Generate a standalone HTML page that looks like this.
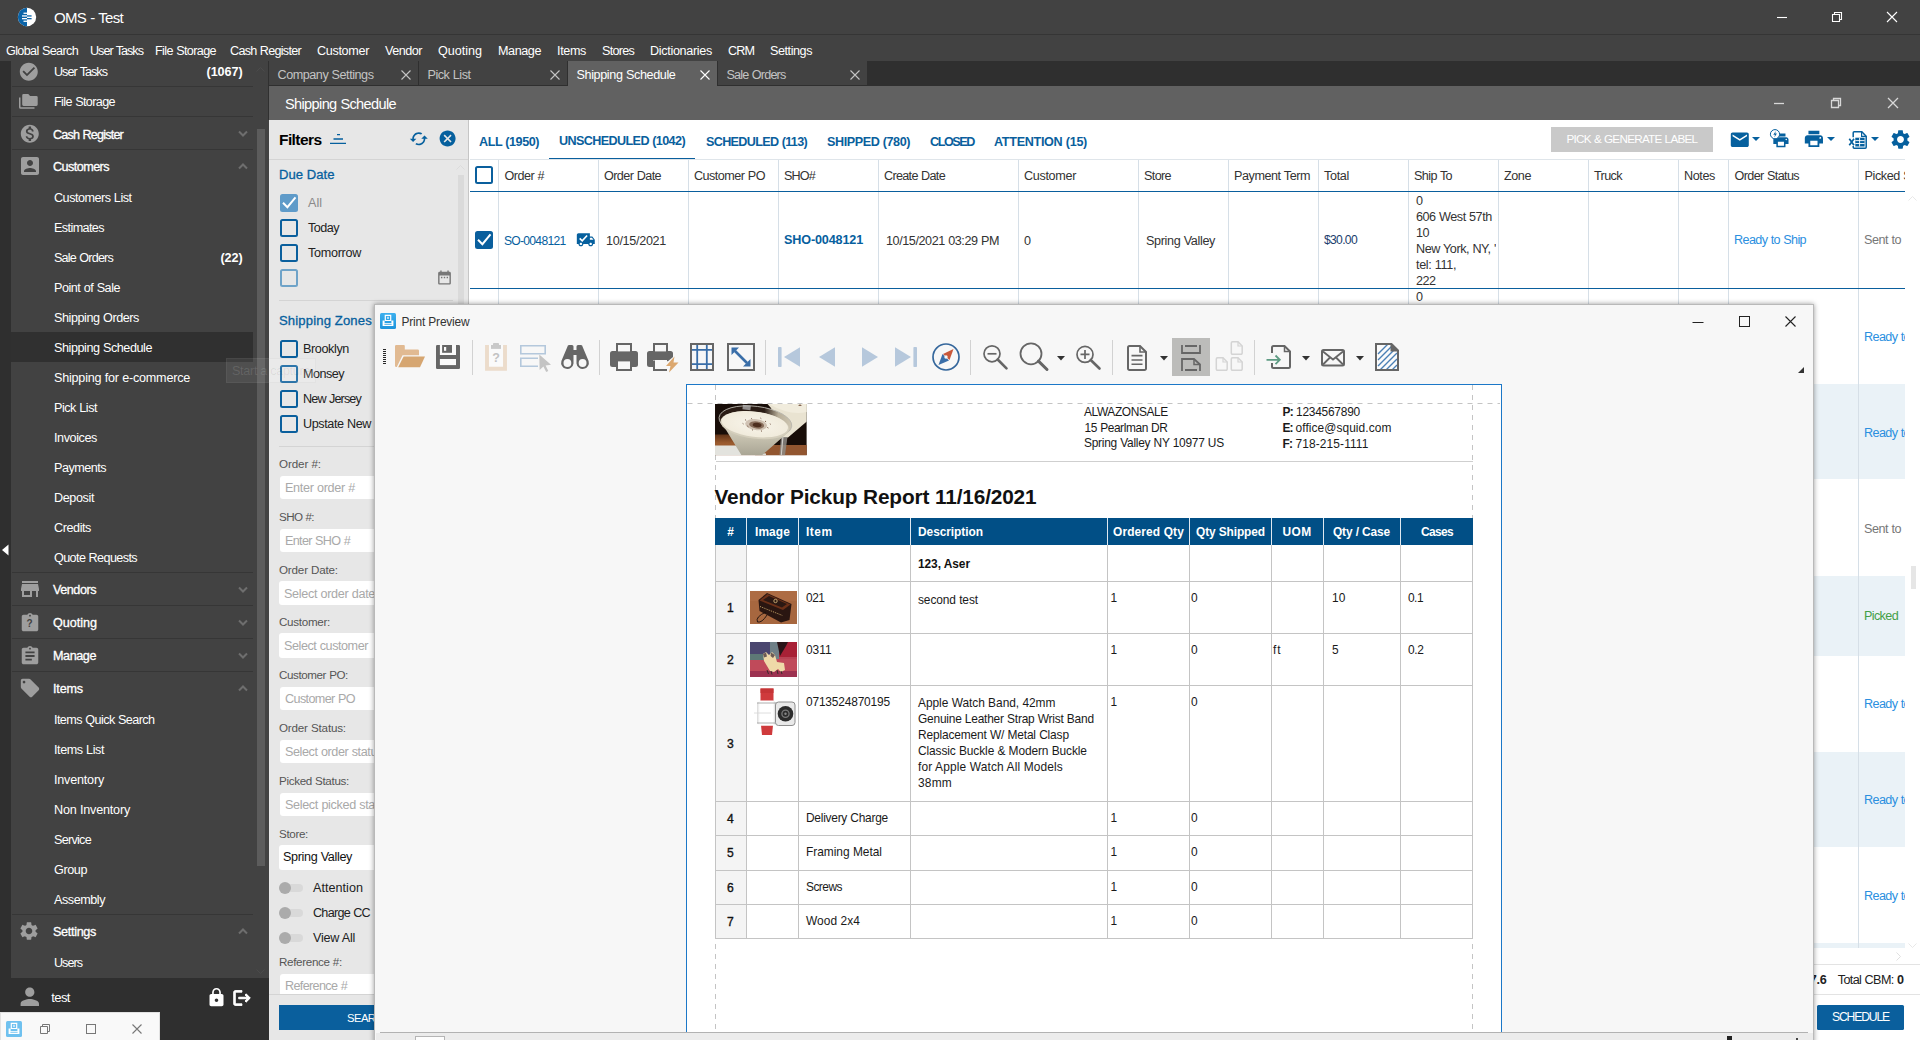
<!DOCTYPE html>
<html><head><meta charset="utf-8"><title>OMS - Test</title>
<style>
html,body{margin:0;padding:0;}
body{width:1920px;height:1040px;overflow:hidden;position:relative;background:#424242;font-family:"Liberation Sans",sans-serif;}
body div,body svg,.t{position:absolute;}
.t{white-space:nowrap;display:block;}
svg{overflow:visible;}
</style></head><body>
<div style="left:0px;top:0px;width:1920px;height:35px;background:#424242;"></div>
<div style="left:0px;top:34px;width:1920px;height:1px;background:#353535;"></div>
<svg style="left:17px;top:7px;" width="20" height="20" viewBox="0 0 20 20"><circle cx="10" cy="10" r="9.2" fill="#fff"/><path d="M10 .8A9.2 9.2 0 0 0 10 19.2Z" fill="#0b64a8"/><rect x="6.5" y="5.6" width="7" height="1.3" fill="#fff"/><rect x="5" y="8.3" width="5" height="1.3" fill="#fff"/><rect x="5" y="11" width="5" height="1.3" fill="#fff"/><rect x="6.5" y="13.6" width="7" height="1.3" fill="#fff"/><rect x="10" y="8.3" width="4.6" height="1.3" fill="#0b64a8"/><rect x="10" y="11" width="4.6" height="1.3" fill="#0b64a8"/></svg>
<span class="t" style="left:54.0px;top:7.0px;font-size:15.04px;line-height:22px;letter-spacing:-0.687px;color:#fff;word-spacing:0.481px;">OMS - Test</span>
<svg style="left:1776px;top:11px;" width="12" height="12" viewBox="0 0 12 12"><path d="M1 6.5H11" stroke="#fff" stroke-width="1.1"/></svg>
<svg style="left:1831px;top:11px;" width="12" height="12" viewBox="0 0 12 12"><path d="M1.5 3.5h7v7h-7z M3.5 3.5v-2h7v7h-2" fill="none" stroke="#fff" stroke-width="1.1"/></svg>
<svg style="left:1886px;top:11px;" width="12" height="12" viewBox="0 0 12 12"><path d="M1 1L11 11M11 1L1 11" stroke="#fff" stroke-width="1.1"/></svg>
<span class="t" style="left:6.0px;top:41.5px;font-size:12.61px;line-height:18px;letter-spacing:-0.643px;color:#fff;word-spacing:0.450px;">Global Search</span>
<span class="t" style="left:90.0px;top:41.5px;font-size:12.61px;line-height:18px;letter-spacing:-0.982px;color:#fff;word-spacing:0.687px;">User Tasks</span>
<span class="t" style="left:155.0px;top:41.5px;font-size:12.61px;line-height:18px;letter-spacing:-0.618px;color:#fff;word-spacing:0.433px;">File Storage</span>
<span class="t" style="left:230.0px;top:41.5px;font-size:12.61px;line-height:18px;letter-spacing:-0.723px;color:#fff;word-spacing:0.506px;">Cash Register</span>
<span class="t" style="left:317.0px;top:41.5px;font-size:12.61px;line-height:18px;letter-spacing:-0.332px;color:#fff;">Customer</span>
<span class="t" style="left:385.0px;top:41.5px;font-size:12.61px;line-height:18px;letter-spacing:-0.494px;color:#fff;">Vendor</span>
<span class="t" style="left:438.0px;top:41.5px;font-size:12.61px;line-height:18px;letter-spacing:-0.023px;color:#fff;">Quoting</span>
<span class="t" style="left:498.0px;top:41.5px;font-size:12.61px;line-height:18px;letter-spacing:-0.428px;color:#fff;">Manage</span>
<span class="t" style="left:557.0px;top:41.5px;font-size:12.61px;line-height:18px;letter-spacing:-0.366px;color:#fff;">Items</span>
<span class="t" style="left:602.0px;top:41.5px;font-size:12.61px;line-height:18px;letter-spacing:-0.740px;color:#fff;">Stores</span>
<span class="t" style="left:650.0px;top:41.5px;font-size:12.61px;line-height:18px;letter-spacing:-0.323px;color:#fff;">Dictionaries</span>
<span class="t" style="left:728.0px;top:41.5px;font-size:12.61px;line-height:18px;letter-spacing:-0.906px;color:#fff;">CRM</span>
<span class="t" style="left:770.0px;top:41.5px;font-size:12.61px;line-height:18px;letter-spacing:-0.445px;color:#fff;">Settings</span>
<div style="left:0px;top:61px;width:11px;height:979px;background:#2f2f2f;"></div>
<svg style="left:1px;top:544px;" width="8" height="12" viewBox="0 0 8 12"><path d="M7.5 0.5V11.5L1 6Z" fill="#fff"/></svg>
<div style="left:11px;top:61px;width:258px;height:917px;background:#424242;"></div>
<div style="left:11px;top:332px;width:242px;height:30px;background:#303030;"></div>
<div style="left:12px;top:86px;width:241px;height:1px;background:#363636;"></div>
<div style="left:12px;top:116px;width:241px;height:1px;background:#363636;"></div>
<div style="left:12px;top:149px;width:241px;height:1px;background:#363636;"></div>
<div style="left:12px;top:572px;width:241px;height:1px;background:#363636;"></div>
<div style="left:12px;top:605px;width:241px;height:1px;background:#363636;"></div>
<div style="left:12px;top:638px;width:241px;height:1px;background:#363636;"></div>
<div style="left:12px;top:671px;width:241px;height:1px;background:#363636;"></div>
<div style="left:12px;top:914px;width:241px;height:1px;background:#363636;"></div>
<div style="left:257px;top:129px;width:7.5px;height:737px;background:#5c5c5c;"></div>
<svg style="left:255px;top:66px;" width="11" height="7" viewBox="0 0 11 7"><path d="M1.5 5.5L5.5 1.5L9.5 5.5" fill="none" stroke="#4b4b4b" stroke-width="1"/></svg>
<svg style="left:255px;top:968px;" width="11" height="7" viewBox="0 0 11 7"><path d="M1.5 1.5L5.5 5.5L9.5 1.5" fill="none" stroke="#4b4b4b" stroke-width="1"/></svg>
<svg style="left:17.8px;top:60.7px;" width="21.6" height="21.6" viewBox="0 0 24 24"><path fill="#9e9e9e" d="M12 2C6.48 2 2 6.48 2 12s4.48 10 10 10 10-4.48 10-10S17.52 2 12 2zm-2 15l-5-5 1.41-1.41L10 14.17l7.59-7.59L19 8l-9 9z"/></svg>
<span class="t" style="left:54.0px;top:63.0px;font-size:12.61px;line-height:18px;letter-spacing:-0.982px;color:#fff;word-spacing:0.687px;">User Tasks</span>
<span class="t" style="left:206.5px;top:63.0px;font-size:12.61px;line-height:18px;letter-spacing:-0.074px;color:#fff;font-weight:bold;">(1067)</span>
<svg style="left:19px;top:94px;" width="19" height="15" viewBox="0 0 19 15"><path d="M0 3.5V13.2a1.6 1.6 0 0 0 1.6 1.6H15.5V13.3H1.5V3.5Z" fill="#9e9e9e"/><path d="M4.6 0h4.7l1.8 1.9h6.2a1.4 1.4 0 0 1 1.4 1.4v7.3a1.4 1.4 0 0 1-1.4 1.4H4.6a1.4 1.4 0 0 1-1.4-1.4V1.4A1.4 1.4 0 0 1 4.6 0Z" fill="#9e9e9e"/></svg>
<span class="t" style="left:54.0px;top:93.0px;font-size:12.61px;line-height:18px;letter-spacing:-0.618px;color:#fff;word-spacing:0.433px;">File Storage</span>
<svg style="left:18.7px;top:122.5px;" width="21.6" height="21.6" viewBox="0 0 24 24"><path fill="#9e9e9e" d="M12 2C6.48 2 2 6.48 2 12s4.48 10 10 10 10-4.48 10-10S17.52 2 12 2zm1.41 16.09V20h-2.67v-1.93c-1.71-.36-3.16-1.46-3.27-3.4h1.96c.1 1.05.82 1.87 2.65 1.87 1.96 0 2.4-.98 2.4-1.59 0-.83-.44-1.61-2.67-2.14-2.48-.6-4.18-1.62-4.18-3.67 0-1.72 1.39-2.84 3.11-3.21V4h2.67v1.95c1.86.45 2.79 1.86 2.85 3.39H14.3c-.05-1.11-.64-1.87-2.22-1.87-1.5 0-2.4.68-2.4 1.64 0 .84.65 1.39 2.67 1.91s4.18 1.39 4.18 3.91c-.01 1.83-1.38 2.83-3.12 3.16z"/></svg>
<span class="t" style="left:53.0px;top:125.5px;font-size:12.61px;line-height:18px;letter-spacing:-0.804px;color:#fff;word-spacing:0.563px;-webkit-text-stroke:0.3px #fff;">Cash Register</span>
<svg style="left:17.5px;top:154.0px;" width="24" height="24" viewBox="0 0 24 24"><path fill="#9e9e9e" d="M3 5v14c0 1.1.89 2 2 2h14c1.1 0 2-.9 2-2V5c0-1.1-.9-2-2-2H5c-1.11 0-2 .9-2 2zm12 4c0 1.66-1.34 3-3 3s-3-1.34-3-3 1.34-3 3-3 3 1.34 3 3zm-9 8c0-2 4-3.1 6-3.1s6 1.1 6 3.1v1H6v-1z"/></svg>
<span class="t" style="left:53.0px;top:158.3px;font-size:12.61px;line-height:18px;letter-spacing:-0.551px;color:#fff;-webkit-text-stroke:0.3px #fff;">Customers</span>
<svg style="left:237.5px;top:130px;" width="10" height="7" viewBox="0 0 10 7"><path d="M1 1.5L5 5.5L9 1.5" fill="none" stroke="#6e6e6e" stroke-width="2"/></svg>
<svg style="left:237.5px;top:163px;" width="10" height="7" viewBox="0 0 10 7"><path d="M1 5.5L5 1.5L9 5.5" fill="none" stroke="#6e6e6e" stroke-width="2"/></svg>
<span class="t" style="left:54.0px;top:189.0px;font-size:12.61px;line-height:18px;letter-spacing:-0.495px;color:#fff;word-spacing:0.347px;">Customers List</span>
<span class="t" style="left:54.0px;top:219.0px;font-size:12.61px;line-height:18px;letter-spacing:-0.595px;color:#fff;">Estimates</span>
<span class="t" style="left:54.0px;top:249.0px;font-size:12.61px;line-height:18px;letter-spacing:-0.804px;color:#fff;word-spacing:0.562px;">Sale Orders</span>
<span class="t" style="left:54.0px;top:279.0px;font-size:12.61px;line-height:18px;letter-spacing:-0.474px;color:#fff;word-spacing:0.332px;">Point of Sale</span>
<span class="t" style="left:54.0px;top:309.0px;font-size:12.61px;line-height:18px;letter-spacing:-0.428px;color:#fff;word-spacing:0.299px;">Shipping Orders</span>
<span class="t" style="left:54.0px;top:339.0px;font-size:12.61px;line-height:18px;letter-spacing:-0.439px;color:#fff;word-spacing:0.307px;">Shipping Schedule</span>
<span class="t" style="left:54.0px;top:369.0px;font-size:12.61px;line-height:18px;letter-spacing:-0.225px;color:#fff;word-spacing:0.158px;">Shipping for e-commerce</span>
<span class="t" style="left:54.0px;top:399.0px;font-size:12.61px;line-height:18px;letter-spacing:-0.476px;color:#fff;word-spacing:0.333px;">Pick List</span>
<span class="t" style="left:54.0px;top:429.0px;font-size:12.61px;line-height:18px;letter-spacing:-0.407px;color:#fff;">Invoices</span>
<span class="t" style="left:54.0px;top:459.0px;font-size:12.61px;line-height:18px;letter-spacing:-0.508px;color:#fff;">Payments</span>
<span class="t" style="left:54.0px;top:489.0px;font-size:12.61px;line-height:18px;letter-spacing:-0.393px;color:#fff;">Deposit</span>
<span class="t" style="left:54.0px;top:519.0px;font-size:12.61px;line-height:18px;letter-spacing:-0.420px;color:#fff;">Credits</span>
<span class="t" style="left:54.0px;top:549.0px;font-size:12.61px;line-height:18px;letter-spacing:-0.611px;color:#fff;word-spacing:0.427px;">Quote Requests</span>
<span class="t" style="left:220.5px;top:249.0px;font-size:12.61px;line-height:18px;letter-spacing:-0.106px;color:#fff;font-weight:bold;">(22)</span>
<svg style="left:17.6px;top:577.0px;" width="24" height="24" viewBox="0 0 24 24"><path fill="#9e9e9e" d="M20 4H4v2h16V4zm1 10v-2l-1-5H4l-1 5v2h1v6h10v-6h4v6h2v-6h1zm-9 4H6v-4h6v4z"/></svg>
<span class="t" style="left:53.0px;top:581.0px;font-size:12.61px;line-height:18px;letter-spacing:-0.467px;color:#fff;-webkit-text-stroke:0.3px #fff;">Vendors</span>
<svg style="left:237.5px;top:586px;" width="10" height="7" viewBox="0 0 10 7"><path d="M1 1.5L5 5.5L9 1.5" fill="none" stroke="#6e6e6e" stroke-width="2"/></svg>
<svg style="left:18.6px;top:612px;" width="22" height="22" viewBox="0 0 24 24"><path fill="#9e9e9e" d="M19 3h-4.18C14.4 1.84 13.3 1 12 1c-1.3 0-2.4.84-2.82 2H5c-1.1 0-2 .9-2 2v14c0 1.1.9 2 2 2h14c1.1 0 2-.9 2-2V5c0-1.1-.9-2-2-2zm-7 0c.55 0 1 .45 1 1s-.45 1-1 1-1-.45-1-1 .45-1 1-1z"/></svg>
<span class="t" style="left:26.4px;top:616.8px;font-size:10.00px;line-height:14px;letter-spacing:0.000px;color:#424242;font-weight:bold;">?</span>
<span class="t" style="left:53.0px;top:614.0px;font-size:12.61px;line-height:18px;letter-spacing:-0.023px;color:#fff;-webkit-text-stroke:0.3px #fff;">Quoting</span>
<svg style="left:237.5px;top:619px;" width="10" height="7" viewBox="0 0 10 7"><path d="M1 1.5L5 5.5L9 1.5" fill="none" stroke="#6e6e6e" stroke-width="2"/></svg>
<svg style="left:18.6px;top:645.0px;" width="22" height="22" viewBox="0 0 24 24"><path fill="#9e9e9e" d="M19 3h-4.18C14.4 1.84 13.3 1 12 1c-1.3 0-2.4.84-2.82 2H5c-1.1 0-2 .9-2 2v14c0 1.1.9 2 2 2h14c1.1 0 2-.9 2-2V5c0-1.1-.9-2-2-2zm-7 0c.55 0 1 .45 1 1s-.45 1-1 1-1-.45-1-1 .45-1 1-1zm2 14H7v-2h7v2zm3-4H7v-2h10v2zm0-4H7V7h10v2z"/></svg>
<span class="t" style="left:53.0px;top:647.0px;font-size:12.61px;line-height:18px;letter-spacing:-0.428px;color:#fff;-webkit-text-stroke:0.3px #fff;">Manage</span>
<svg style="left:237.5px;top:652px;" width="10" height="7" viewBox="0 0 10 7"><path d="M1 1.5L5 5.5L9 1.5" fill="none" stroke="#6e6e6e" stroke-width="2"/></svg>
<svg style="left:18.5px;top:677.0px;" width="22" height="22" viewBox="0 0 24 24"><path fill="#9e9e9e" d="M21.41 11.58l-9-9C12.05 2.22 11.55 2 11 2H4c-1.1 0-2 .9-2 2v7c0 .55.22 1.05.59 1.42l9 9c.36.36.86.58 1.41.58.55 0 1.05-.22 1.41-.59l7-7c.37-.36.59-.86.59-1.41 0-.55-.23-1.06-.59-1.42zM5.5 7C4.67 7 4 6.33 4 5.5S4.67 4 5.5 4 7 4.67 7 5.5 6.33 7 5.5 7z"/></svg>
<span class="t" style="left:53.0px;top:680.0px;font-size:12.61px;line-height:18px;letter-spacing:-0.166px;color:#fff;-webkit-text-stroke:0.3px #fff;">Items</span>
<svg style="left:237.5px;top:685px;" width="10" height="7" viewBox="0 0 10 7"><path d="M1 5.5L5 1.5L9 5.5" fill="none" stroke="#6e6e6e" stroke-width="2"/></svg>
<span class="t" style="left:54.0px;top:711.0px;font-size:12.61px;line-height:18px;letter-spacing:-0.573px;color:#fff;word-spacing:0.401px;">Items Quick Search</span>
<span class="t" style="left:54.0px;top:741.0px;font-size:12.61px;line-height:18px;letter-spacing:-0.425px;color:#fff;word-spacing:0.298px;">Items List</span>
<span class="t" style="left:54.0px;top:771.0px;font-size:12.61px;line-height:18px;letter-spacing:-0.207px;color:#fff;">Inventory</span>
<span class="t" style="left:54.0px;top:801.0px;font-size:12.61px;line-height:18px;letter-spacing:-0.203px;color:#fff;word-spacing:0.142px;">Non Inventory</span>
<span class="t" style="left:54.0px;top:831.0px;font-size:12.61px;line-height:18px;letter-spacing:-0.721px;color:#fff;">Service</span>
<span class="t" style="left:54.0px;top:861.0px;font-size:12.61px;line-height:18px;letter-spacing:-0.409px;color:#fff;">Group</span>
<span class="t" style="left:54.0px;top:891.0px;font-size:12.61px;line-height:18px;letter-spacing:-0.457px;color:#fff;">Assembly</span>
<svg style="left:18.4px;top:920.0px;" width="22" height="22" viewBox="0 0 24 24"><path fill="#9e9e9e" d="M19.14 12.94c.04-.3.06-.61.06-.94 0-.32-.02-.64-.07-.94l2.03-1.58c.18-.14.23-.41.12-.61l-1.92-3.32c-.12-.22-.37-.29-.59-.22l-2.39.96c-.5-.38-1.03-.7-1.62-.94l-.36-2.54c-.04-.24-.24-.41-.48-.41h-3.84c-.24 0-.43.17-.47.41l-.36 2.54c-.59.24-1.13.57-1.62.94l-2.39-.96c-.22-.08-.47 0-.59.22L2.74 8.87c-.12.21-.08.47.12.61l2.03 1.58c-.05.3-.09.63-.09.94s.02.64.07.94l-2.03 1.58c-.18.14-.23.41-.12.61l1.92 3.32c.12.22.37.29.59.22l2.39-.96c.5.38 1.03.7 1.62.94l.36 2.54c.05.24.24.41.48.41h3.84c.24 0 .44-.17.47-.41l.36-2.54c.59-.24 1.13-.56 1.62-.94l2.39.96c.22.08.47 0 .59-.22l1.92-3.32c.12-.22.07-.47-.12-.61l-2.01-1.58zM12 15.6c-1.98 0-3.6-1.62-3.6-3.6s1.62-3.6 3.6-3.6 3.6 1.62 3.6 3.6-1.62 3.6-3.6 3.6z"/></svg>
<span class="t" style="left:53.0px;top:923.0px;font-size:12.61px;line-height:18px;letter-spacing:-0.320px;color:#fff;-webkit-text-stroke:0.3px #fff;">Settings</span>
<svg style="left:237.5px;top:928px;" width="10" height="7" viewBox="0 0 10 7"><path d="M1 5.5L5 1.5L9 5.5" fill="none" stroke="#6e6e6e" stroke-width="2"/></svg>
<span class="t" style="left:54.0px;top:954.0px;font-size:12.61px;line-height:18px;letter-spacing:-0.986px;color:#fff;">Users</span>
<div style="left:0px;top:978px;width:269px;height:62px;background:#2f2f2f;"></div>
<svg style="left:16.0px;top:983.0px;" width="27.6" height="27.6" viewBox="0 0 24 24"><path fill="#9e9e9e" d="M12 12c2.21 0 4-1.79 4-4s-1.79-4-4-4-4 1.79-4 4 1.79 4 4 4zm0 2c-2.67 0-8 1.34-8 4v2h16v-2c0-2.66-5.33-4-8-4z"/></svg>
<span class="t" style="left:51.3px;top:988.1px;font-size:13.09px;line-height:19px;letter-spacing:-0.651px;color:#fff;">test</span>
<svg style="left:205.5px;top:986.7px;" width="21" height="21" viewBox="0 0 24 24"><path fill="#fff" d="M18 8h-1V6c0-2.76-2.24-5-5-5S7 3.24 7 6v2H6c-1.1 0-2 .9-2 2v10c0 1.1.9 2 2 2h12c1.1 0 2-.9 2-2V10c0-1.1-.9-2-2-2zm-6 9c-1.1 0-2-.9-2-2s.9-2 2-2 2 .9 2 2-.9 2-2 2zm3.1-9H8.9V6c0-1.71 1.39-3.1 3.1-3.1 1.71 0 3.1 1.39 3.1 3.1v2z"/></svg>
<svg style="left:231.5px;top:987.5px;" width="20" height="20" viewBox="0 0 24 24"><path fill="#fff" d="M17 7l-1.41 1.41L18.17 11H8v2h10.17l-2.58 2.58L17 17l5-5zM4 5h8V3H4c-1.1 0-2 .9-2 2v14c0 1.1.9 2 2 2h8v-2H4V5z"/></svg>
<svg style="left:231.5px;top:987.5px;" width="20" height="20" viewBox="0 0 24 24"><path d="M17 7l-1.41 1.41L18.17 11H8v2h10.17l-2.58 2.58L17 17l5-5zM4 5h8V3H4c-1.1 0-2 .9-2 2v14c0 1.1.9 2 2 2h8v-2H4V5z" fill="#fff" stroke="#fff" stroke-width="0.900"/></svg>
<div style="left:0px;top:1012px;width:160px;height:28px;background:#f9f9f9;border:1px solid #e2e2e2;border-bottom:none;box-sizing:border-box;"></div>
<svg style="left:6px;top:1021px;" width="16" height="16" viewBox="0 0 16 16"><rect width="16" height="16" rx="1.5" fill="#6fc1ef"/><path d="M5.3 2.3h5.4v5.2H5.3z" fill="none" stroke="#fff" stroke-width="1.200"/><rect x="7.200" y="3.800" width="1.600" height="2.200" fill="#d7efff"/><path d="M2.600 7.600h2v2.300h6.800V7.600h2v5.400H2.600z" fill="#fff"/><rect x="4.400" y="10.800" width="7.200" height="0.900" fill="#6fc1ef"/></svg>
<svg style="left:40px;top:1024px;" width="10" height="10" viewBox="0 0 10 10"><path d="M0.500 2.500h7v7h-7z M2.500 2.500v-2h7v7h-2" fill="none" stroke="#777" stroke-width="1"/></svg>
<svg style="left:86px;top:1024px;" width="10" height="10" viewBox="0 0 10 10"><rect x="0.500" y="0.500" width="9" height="9" fill="none" stroke="#777" stroke-width="1"/></svg>
<svg style="left:132.3px;top:1024px;" width="10" height="10" viewBox="0 0 10 10"><path d="M0.500 0.500L9.500 9.500M9.500 0.500L0.500 9.500" stroke="#777" stroke-width="1.100"/></svg>
<div style="left:269px;top:61px;width:1651px;height:26px;background:#2f2f2f;"></div>
<div style="left:265px;top:61px;width:4px;height:917px;background:#424242;"></div>
<div style="left:269px;top:61.3px;width:149px;height:23.9px;background:#424242;"></div>
<span class="t" style="left:277.5px;top:66.0px;font-size:12.61px;line-height:18px;letter-spacing:-0.459px;color:#c4c4c4;word-spacing:0.322px;">Company Settings</span>
<svg style="left:401px;top:70px;" width="10" height="10" viewBox="0 0 10 10"><path d="M0.5 0.5L9.5 9.5M9.5 0.5L0.5 9.5" stroke="#c4c4c4" stroke-width="1.1"/></svg>
<div style="left:419px;top:61.3px;width:148px;height:23.9px;background:#424242;"></div>
<span class="t" style="left:427.5px;top:66.0px;font-size:12.61px;line-height:18px;letter-spacing:-0.476px;color:#c4c4c4;word-spacing:0.333px;">Pick List</span>
<svg style="left:550px;top:70px;" width="10" height="10" viewBox="0 0 10 10"><path d="M0.5 0.5L9.5 9.5M9.5 0.5L0.5 9.5" stroke="#c4c4c4" stroke-width="1.1"/></svg>
<div style="left:568px;top:61.3px;width:149px;height:25.5px;background:#616161;"></div>
<span class="t" style="left:576.5px;top:66.0px;font-size:12.61px;line-height:18px;letter-spacing:-0.378px;color:#fff;word-spacing:0.265px;">Shipping Schedule</span>
<svg style="left:700px;top:70px;" width="10" height="10" viewBox="0 0 10 10"><path d="M0.5 0.5L9.5 9.5M9.5 0.5L0.5 9.5" stroke="#fff" stroke-width="1.1"/></svg>
<div style="left:718px;top:61.3px;width:149px;height:23.9px;background:#424242;"></div>
<span class="t" style="left:726.5px;top:66.0px;font-size:12.61px;line-height:18px;letter-spacing:-0.804px;color:#c4c4c4;word-spacing:0.562px;">Sale Orders</span>
<svg style="left:850px;top:70px;" width="10" height="10" viewBox="0 0 10 10"><path d="M0.5 0.5L9.5 9.5M9.5 0.5L0.5 9.5" stroke="#c4c4c4" stroke-width="1.1"/></svg>
<div style="left:269px;top:86.2px;width:1651px;height:33.8px;background:#616161;"></div>
<div style="left:268px;top:61px;width:1px;height:59px;background:#303030;"></div>
<span class="t" style="left:285.0px;top:94.0px;font-size:14.55px;line-height:21px;letter-spacing:-0.634px;color:#fff;word-spacing:0.444px;">Shipping Schedule</span>
<svg style="left:1772.5px;top:97px;" width="12" height="12" viewBox="0 0 12 12"><path d="M1 6.5H11" stroke="#d8d8d8" stroke-width="1.3"/></svg>
<svg style="left:1829.5px;top:97px;" width="12" height="12" viewBox="0 0 12 12"><path d="M1.5 3.5h7v7h-7z M3.5 3.5v-2h7v7h-2" fill="none" stroke="#d8d8d8" stroke-width="1.3"/></svg>
<svg style="left:1886.5px;top:97px;" width="12" height="12" viewBox="0 0 12 12"><path d="M1 1L11 11M11 1L1 11" stroke="#d8d8d8" stroke-width="1.3"/></svg>
<div style="left:269px;top:120px;width:1651px;height:920px;background:#fff;"></div>
<div style="left:269px;top:120px;width:199px;height:920px;background:#e7e7e7;"></div>
<span class="t" style="left:279.0px;top:129.2px;font-size:15.52px;line-height:22px;letter-spacing:-0.582px;color:#000;font-weight:bold;">Filters</span>
<svg style="left:330px;top:134px;" width="16" height="10" viewBox="0 0 16 10"><path d="M7 0.7H10M3.5 5H13M0 9.3H16" stroke="#06609e" stroke-width="1.3"/></svg>
<svg style="left:409.2px;top:129.2px;" width="19.6" height="19.6" viewBox="0 0 24 24"><path fill="#06609e" d="M19 8l-4 4h3c0 3.31-2.69 6-6 6-1.01 0-1.97-.25-2.8-.7l-1.46 1.46C8.97 19.54 10.43 20 12 20c4.42 0 8-3.58 8-8h3l-4-4zM6 12c0-3.31 2.69-6 6-6 1.01 0 1.97.25 2.8.7l1.46-1.46C15.03 4.46 13.57 4 12 4c-4.42 0-8 3.58-8 8H1l4 4 4-4H6z"/></svg>
<svg style="left:437.5px;top:129.4px;" width="19.2" height="19.2" viewBox="0 0 24 24"><path fill="#06609e" d="M12 2C6.47 2 2 6.47 2 12s4.47 10 10 10 10-4.47 10-10S17.53 2 12 2zm5 13.59L15.59 17 12 13.41 8.41 17 7 15.59 10.59 12 7 8.41 8.41 7 12 10.59 15.59 7 17 8.41 13.41 12 17 15.59z"/></svg>
<div style="left:269px;top:159px;width:199px;height:1px;background:#d4d4d4;"></div>
<div style="left:457.5px;top:175px;width:6.5px;height:815px;background:#dadada;"></div>
<svg style="left:455px;top:164px;" width="11" height="7" viewBox="0 0 11 7"><path d="M1.5 5.5L5.5 1.5L9.5 5.5" fill="none" stroke="#dcdcdc" stroke-width="1"/></svg>
<span class="t" style="left:279.0px;top:165.4px;font-size:13.09px;line-height:19px;letter-spacing:0.023px;color:#06609e;-webkit-text-stroke:0.3px #06609e;">Due Date</span>
<div style="left:280px;top:194px;width:18px;height:18px;background:#5f9bc9;border-radius:2.5px;"></div>
<svg style="left:280px;top:194px;" width="18" height="18" viewBox="0 0 18 18"><path d="M3 8.700L7.400 13.200L15.500 3.400" fill="none" stroke="#fff" stroke-width="2"/></svg>
<span class="t" style="left:308.0px;top:193.7px;font-size:12.61px;line-height:18px;letter-spacing:-0.005px;color:#8a8a8a;">All</span>
<div style="left:280px;top:219px;width:18px;height:18px;border:2px solid #0a5f9d;border-radius:2.5px;box-sizing:border-box;"></div>
<span class="t" style="left:308.0px;top:219.0px;font-size:12.61px;line-height:18px;letter-spacing:-0.529px;color:#222;">Today</span>
<div style="left:280px;top:244px;width:18px;height:18px;border:2px solid #0a5f9d;border-radius:2.5px;box-sizing:border-box;"></div>
<span class="t" style="left:308.0px;top:244.0px;font-size:12.61px;line-height:18px;letter-spacing:-0.294px;color:#222;">Tomorrow</span>
<div style="left:280px;top:269px;width:18px;height:18px;border:2px solid #6fa3c8;border-radius:2.5px;box-sizing:border-box;"></div>
<svg style="left:436.0px;top:268.5px;" width="17" height="17" viewBox="0 0 24 24"><path fill="#777" d="M9 11H7v2h2v-2zm4 0h-2v2h2v-2zm4 0h-2v2h2v-2zm2-7h-1V2h-2v2H8V2H6v2H5c-1.11 0-1.99.9-1.99 2L3 20c0 1.1.89 2 2 2h14c1.1 0 2-.9 2-2V6c0-1.1-.9-2-2-2zm0 16H5V9h14v11z"/></svg>
<div style="left:279px;top:300px;width:174px;height:1px;background:#d4d4d4;"></div>
<span class="t" style="left:279.0px;top:310.8px;font-size:13.09px;line-height:19px;letter-spacing:0.143px;color:#06609e;-webkit-text-stroke:0.3px #06609e;">Shipping Zones</span>
<div style="left:280px;top:340px;width:18px;height:18px;border:2px solid #0a5f9d;border-radius:2.5px;box-sizing:border-box;"></div>
<span class="t" style="left:303.0px;top:340.0px;font-size:12.61px;line-height:18px;letter-spacing:-0.382px;color:#222;">Brooklyn</span>
<div style="left:280px;top:365px;width:18px;height:18px;border:2px solid #0a5f9d;border-radius:2.5px;box-sizing:border-box;"></div>
<span class="t" style="left:303.0px;top:365.0px;font-size:12.61px;line-height:18px;letter-spacing:-0.525px;color:#222;">Monsey</span>
<div style="left:280px;top:390px;width:18px;height:18px;border:2px solid #0a5f9d;border-radius:2.5px;box-sizing:border-box;"></div>
<span class="t" style="left:303.0px;top:390.0px;font-size:12.61px;line-height:18px;letter-spacing:-0.846px;color:#222;word-spacing:0.592px;">New Jersey</span>
<div style="left:280px;top:415px;width:18px;height:18px;border:2px solid #0a5f9d;border-radius:2.5px;box-sizing:border-box;"></div>
<span class="t" style="left:303.0px;top:415.0px;font-size:12.61px;line-height:18px;letter-spacing:-0.406px;color:#222;word-spacing:0.284px;">Upstate New</span>
<div style="left:279px;top:446px;width:174px;height:1px;background:#d4d4d4;"></div>
<span class="t" style="left:279.0px;top:455.3px;font-size:11.64px;line-height:17px;letter-spacing:-0.095px;color:#555;word-spacing:0.066px;">Order #:</span>
<div style="left:280px;top:476px;width:175px;height:23px;background:#fff;border-radius:3px;"></div>
<span class="t" style="left:285.0px;top:478.8px;font-size:12.61px;line-height:18px;letter-spacing:-0.310px;color:#a9a9a9;word-spacing:0.217px;">Enter order #</span>
<span class="t" style="left:279.0px;top:508.3px;font-size:11.64px;line-height:17px;letter-spacing:-0.597px;color:#555;word-spacing:0.418px;">SHO #:</span>
<div style="left:280px;top:529px;width:175px;height:23px;background:#fff;border-radius:3px;"></div>
<span class="t" style="left:285.0px;top:531.8px;font-size:12.61px;line-height:18px;letter-spacing:-0.675px;color:#a9a9a9;word-spacing:0.473px;">Enter SHO #</span>
<span class="t" style="left:279.0px;top:561.3px;font-size:11.64px;line-height:17px;letter-spacing:-0.175px;color:#555;word-spacing:0.123px;">Order Date:</span>
<div style="left:279px;top:581px;width:176px;height:24px;background:#fff;border-radius:3px;"></div>
<span class="t" style="left:284.0px;top:584.8px;font-size:12.61px;line-height:18px;letter-spacing:-0.322px;color:#a9a9a9;word-spacing:0.226px;">Select order date</span>
<span class="t" style="left:279.0px;top:613.3px;font-size:11.64px;line-height:17px;letter-spacing:-0.298px;color:#555;">Customer:</span>
<div style="left:279px;top:633px;width:176px;height:24.5px;background:#fff;border-radius:3px;"></div>
<span class="t" style="left:284.0px;top:637.0px;font-size:12.61px;line-height:18px;letter-spacing:-0.448px;color:#a9a9a9;word-spacing:0.313px;">Select customer</span>
<span class="t" style="left:279.0px;top:666.3px;font-size:11.64px;line-height:17px;letter-spacing:-0.419px;color:#555;word-spacing:0.293px;">Customer PO:</span>
<div style="left:280px;top:687px;width:175px;height:23px;background:#fff;border-radius:3px;"></div>
<span class="t" style="left:285.0px;top:689.8px;font-size:12.61px;line-height:18px;letter-spacing:-0.619px;color:#a9a9a9;word-spacing:0.433px;">Customer PO</span>
<span class="t" style="left:279.0px;top:719.3px;font-size:11.64px;line-height:17px;letter-spacing:-0.180px;color:#555;word-spacing:0.126px;">Order Status:</span>
<div style="left:280px;top:740px;width:175px;height:23px;background:#fff;border-radius:3px;"></div>
<span class="t" style="left:285.0px;top:742.8px;font-size:12.61px;line-height:18px;letter-spacing:-0.411px;color:#a9a9a9;word-spacing:0.288px;">Select order statu</span>
<span class="t" style="left:279.0px;top:772.3px;font-size:11.64px;line-height:17px;letter-spacing:-0.331px;color:#555;word-spacing:0.232px;">Picked Status:</span>
<div style="left:280px;top:793px;width:175px;height:23px;background:#fff;border-radius:3px;"></div>
<span class="t" style="left:285.0px;top:795.8px;font-size:12.61px;line-height:18px;letter-spacing:-0.341px;color:#a9a9a9;word-spacing:0.239px;">Select picked sta</span>
<span class="t" style="left:279.0px;top:825.3px;font-size:11.64px;line-height:17px;letter-spacing:-0.342px;color:#555;">Store:</span>
<div style="left:279px;top:845px;width:176px;height:25px;background:#fff;border-radius:3px;"></div>
<span class="t" style="left:283.0px;top:848.3px;font-size:12.61px;line-height:18px;letter-spacing:-0.355px;color:#111;word-spacing:0.248px;">Spring Valley</span>
<div style="left:281px;top:884px;width:22px;height:8px;background:#d9d9d9;border-radius:4px;"></div>
<div style="left:279px;top:882px;width:12px;height:12px;background:#ababab;border-radius:6px;"></div>
<span class="t" style="left:313.0px;top:878.8px;font-size:12.61px;line-height:18px;letter-spacing:0.025px;color:#222;">Attention</span>
<div style="left:281px;top:909px;width:22px;height:8px;background:#d9d9d9;border-radius:4px;"></div>
<div style="left:279px;top:907px;width:12px;height:12px;background:#ababab;border-radius:6px;"></div>
<span class="t" style="left:313.0px;top:903.8px;font-size:12.61px;line-height:18px;letter-spacing:-0.732px;color:#222;word-spacing:0.512px;">Charge CC</span>
<div style="left:281px;top:934px;width:22px;height:8px;background:#d9d9d9;border-radius:4px;"></div>
<div style="left:279px;top:932px;width:12px;height:12px;background:#ababab;border-radius:6px;"></div>
<span class="t" style="left:313.0px;top:928.8px;font-size:12.61px;line-height:18px;letter-spacing:-0.264px;color:#222;word-spacing:0.185px;">View All</span>
<span class="t" style="left:279.0px;top:953.3px;font-size:11.64px;line-height:17px;letter-spacing:-0.322px;color:#555;word-spacing:0.226px;">Reference #:</span>
<div style="left:280px;top:974px;width:175px;height:23px;background:#fff;border-radius:3px;"></div>
<span class="t" style="left:285.0px;top:976.8px;font-size:12.61px;line-height:18px;letter-spacing:-0.650px;color:#a9a9a9;word-spacing:0.455px;">Reference #</span>
<div style="left:269px;top:994px;width:199px;height:46px;background:#e7e7e7;"></div>
<div style="left:269px;top:994px;width:199px;height:1px;background:#d4d4d4;"></div>
<div style="left:279px;top:1005px;width:180px;height:25px;background:#0a5f9d;"></div>
<span class="t" style="left:347.0px;top:1009.0px;font-size:11.25px;line-height:18px;letter-spacing:-0.564px;color:#fff;">SEARCH</span>
<div style="left:468px;top:120px;width:1px;height:920px;background:#c6c6c6;"></div>
<span class="t" style="left:479.0px;top:132.5px;font-size:12.61px;line-height:18px;letter-spacing:-0.455px;color:#0a5f9d;font-weight:bold;word-spacing:0.319px;">ALL (1950)</span>
<span class="t" style="left:559.0px;top:132.0px;font-size:12.61px;line-height:18px;letter-spacing:-0.615px;color:#0a5f9d;font-weight:bold;word-spacing:0.430px;">UNSCHEDULED (1042)</span>
<span class="t" style="left:706.0px;top:132.5px;font-size:12.61px;line-height:18px;letter-spacing:-0.679px;color:#0a5f9d;font-weight:bold;word-spacing:0.475px;">SCHEDULED (113)</span>
<span class="t" style="left:827.0px;top:132.5px;font-size:12.61px;line-height:18px;letter-spacing:-0.431px;color:#0a5f9d;font-weight:bold;word-spacing:0.302px;">SHIPPED (780)</span>
<span class="t" style="left:930.0px;top:132.5px;font-size:12.61px;line-height:18px;letter-spacing:-1.424px;color:#0a5f9d;font-weight:bold;">CLOSED</span>
<span class="t" style="left:994.0px;top:132.5px;font-size:12.61px;line-height:18px;letter-spacing:-0.311px;color:#0a5f9d;font-weight:bold;word-spacing:0.218px;">ATTENTION (15)</span>
<div style="left:549px;top:157.5px;width:146px;height:2px;background:#0a5f9d;"></div>
<div style="left:1551px;top:127px;width:162px;height:24.5px;background:#c9c9c9;"></div>
<span class="t" style="left:1566.5px;top:130.3px;font-size:11.70px;line-height:18px;letter-spacing:-0.729px;color:#fff;word-spacing:0.511px;">PICK &amp; GENERATE LABEL</span>
<svg style="left:1729.2px;top:128.5px;" width="21.6" height="21.6" viewBox="0 0 24 24"><path fill="#06609e" d="M20 4H4c-1.1 0-1.99.9-1.99 2L2 18c0 1.1.9 2 2 2h16c1.1 0 2-.9 2-2V6c0-1.1-.9-2-2-2zm0 4l-8 5-8-5V6l8 5 8-5v2z"/></svg>
<svg style="left:1752.3px;top:137px;" width="8" height="4" viewBox="0 0 8 4"><path d="M0 0H8L4 4Z" fill="#06609e"/></svg>
<svg style="left:1770px;top:129px;" width="20" height="20" viewBox="0 0 20 20"><g fill="#06609e"><path transform="translate(1.800,2.200) scale(0.760)" d="M19 8H5c-1.66 0-3 1.34-3 3v6h4v4h12v-4h4v-6c0-1.66-1.34-3-3-3zm-3 11H8v-5h8v5zm3-7c-.55 0-1-.45-1-1s.45-1 1-1 1 .45 1 1-.45 1-1 1zm-1-9H6v4h12V3z"/></g><circle cx="5" cy="5.2" r="4.6" fill="#fff" stroke="#06609e" stroke-width="1"/><path d="M5.8 2L3.3 5.8H5L4.3 8.6L6.9 4.6H5.2Z" fill="#06609e"/></svg>
<svg style="left:1803.1px;top:128.4px;" width="21.8" height="21.8" viewBox="0 0 24 24"><path fill="#06609e" d="M19 8H5c-1.66 0-3 1.34-3 3v6h4v4h12v-4h4v-6c0-1.66-1.34-3-3-3zm-3 11H8v-5h8v5zm3-7c-.55 0-1-.45-1-1s.45-1 1-1 1 .45 1 1-.45 1-1 1zm-1-9H6v4h12V3z"/></svg>
<svg style="left:1826.5px;top:137px;" width="8" height="4" viewBox="0 0 8 4"><path d="M0 0H8L4 4Z" fill="#06609e"/></svg>
<svg style="left:1849px;top:130.5px;" width="19" height="18" viewBox="0 0 19 18"><path d="M5.200 0.800H12.800L17.200 5.200V16.200a1 1 0 0 1-1 1H5.200a1 1 0 0 1-1-1V15M4.200 6.300V1.800a1 1 0 0 1 1-1" fill="none" stroke="#06609e" stroke-width="1.500"/><path d="M12.600 0.800V5.400H17.200" fill="none" stroke="#06609e" stroke-width="1.200"/><path d="M6.300 6.700h9.300v8.800h-9.300z" fill="#06609e"/><path d="M6.300 9.600H15.600M6.300 12.500H15.600M10.600 6.700V15.500" stroke="#fff" stroke-width="0.900"/><path d="M0.300 7.800L5 14.300M5 7.800L0.300 14.300" stroke="#06609e" stroke-width="1.700"/></svg>
<svg style="left:1870.5px;top:137px;" width="8" height="4" viewBox="0 0 8 4"><path d="M0 0H8L4 4Z" fill="#06609e"/></svg>
<svg style="left:1888.5px;top:128.0px;" width="23" height="23" viewBox="0 0 24 24"><path fill="#06609e" d="M19.14 12.94c.04-.3.06-.61.06-.94 0-.32-.02-.64-.07-.94l2.03-1.58c.18-.14.23-.41.12-.61l-1.92-3.32c-.12-.22-.37-.29-.59-.22l-2.39.96c-.5-.38-1.03-.7-1.62-.94l-.36-2.54c-.04-.24-.24-.41-.48-.41h-3.84c-.24 0-.43.17-.47.41l-.36 2.54c-.59.24-1.13.57-1.62.94l-2.39-.96c-.22-.08-.47 0-.59.22L2.74 8.87c-.12.21-.08.47.12.61l2.03 1.58c-.05.3-.09.63-.09.94s.02.64.07.94l-2.03 1.58c-.18.14-.23.41-.12.61l1.92 3.32c.12.22.37.29.59.22l2.39-.96c.5.38 1.03.7 1.62.94l.36 2.54c.05.24.24.41.48.41h3.84c.24 0 .44-.17.47-.41l.36-2.54c.59-.24 1.13-.56 1.62-.94l2.39.96c.22.08.47 0 .59-.22l1.92-3.32c.12-.22.07-.47-.12-.61l-2.01-1.58zM12 15.6c-1.98 0-3.6-1.62-3.6-3.6s1.62-3.6 3.6-3.6 3.6 1.62 3.6 3.6-1.62 3.6-3.6 3.6z"/></svg>
<div style="left:469.5px;top:159px;width:1435.5px;height:1px;background:#dfe5ea;"></div>
<div style="left:469.5px;top:384px;width:1435.5px;height:95px;background:#eaf2f7;"></div>
<div style="left:469.5px;top:576px;width:1435.5px;height:80px;background:#eaf2f7;"></div>
<div style="left:469.5px;top:752px;width:1435.5px;height:95px;background:#eaf2f7;"></div>
<div style="left:469.5px;top:943px;width:1435.5px;height:5px;background:#eaf2f7;"></div>
<div style="left:498.0px;top:160px;width:1px;height:788px;background:#d6dfe7;"></div>
<div style="left:598.0px;top:160px;width:1px;height:788px;background:#d6dfe7;"></div>
<div style="left:688.0px;top:160px;width:1px;height:788px;background:#d6dfe7;"></div>
<div style="left:778.0px;top:160px;width:1px;height:788px;background:#d6dfe7;"></div>
<div style="left:878.0px;top:160px;width:1px;height:788px;background:#d6dfe7;"></div>
<div style="left:1018.0px;top:160px;width:1px;height:788px;background:#d6dfe7;"></div>
<div style="left:1138.0px;top:160px;width:1px;height:788px;background:#d6dfe7;"></div>
<div style="left:1228.0px;top:160px;width:1px;height:788px;background:#d6dfe7;"></div>
<div style="left:1318.0px;top:160px;width:1px;height:788px;background:#d6dfe7;"></div>
<div style="left:1408.0px;top:160px;width:1px;height:788px;background:#d6dfe7;"></div>
<div style="left:1498.0px;top:160px;width:1px;height:788px;background:#d6dfe7;"></div>
<div style="left:1588.0px;top:160px;width:1px;height:788px;background:#d6dfe7;"></div>
<div style="left:1678.0px;top:160px;width:1px;height:788px;background:#d6dfe7;"></div>
<div style="left:1728.0px;top:160px;width:1px;height:788px;background:#d6dfe7;"></div>
<div style="left:1858.0px;top:160px;width:1px;height:788px;background:#d6dfe7;"></div>
<div style="left:469.5px;top:190.5px;width:1435.5px;height:1.2px;background:#0a5f9d;"></div>
<div style="left:469.5px;top:287.8px;width:1435.5px;height:1.2px;background:#0a5f9d;"></div>
<span class="t" style="left:504.4px;top:167.3px;font-size:12.61px;line-height:18px;letter-spacing:-0.499px;color:#333;word-spacing:0.350px;">Order #</span>
<span class="t" style="left:604.0px;top:167.3px;font-size:12.61px;line-height:18px;letter-spacing:-0.577px;color:#333;word-spacing:0.404px;">Order Date</span>
<span class="t" style="left:694.0px;top:167.3px;font-size:12.61px;line-height:18px;letter-spacing:-0.522px;color:#333;word-spacing:0.365px;">Customer PO</span>
<span class="t" style="left:784.0px;top:167.3px;font-size:12.61px;line-height:18px;letter-spacing:-0.835px;color:#333;">SHO#</span>
<span class="t" style="left:884.0px;top:167.3px;font-size:12.61px;line-height:18px;letter-spacing:-0.678px;color:#333;word-spacing:0.475px;">Create Date</span>
<span class="t" style="left:1024.0px;top:167.3px;font-size:12.61px;line-height:18px;letter-spacing:-0.332px;color:#333;">Customer</span>
<span class="t" style="left:1144.0px;top:167.3px;font-size:12.61px;line-height:18px;letter-spacing:-0.628px;color:#333;">Store</span>
<span class="t" style="left:1234.0px;top:167.3px;font-size:12.61px;line-height:18px;letter-spacing:-0.447px;color:#333;word-spacing:0.313px;">Payment Term</span>
<span class="t" style="left:1324.0px;top:167.3px;font-size:12.61px;line-height:18px;letter-spacing:-0.327px;color:#333;">Total</span>
<span class="t" style="left:1414.0px;top:167.3px;font-size:12.61px;line-height:18px;letter-spacing:-0.608px;color:#333;word-spacing:0.426px;">Ship To</span>
<span class="t" style="left:1504.0px;top:167.3px;font-size:12.61px;line-height:18px;letter-spacing:-0.435px;color:#333;">Zone</span>
<span class="t" style="left:1594.0px;top:167.3px;font-size:12.61px;line-height:18px;letter-spacing:-0.611px;color:#333;">Truck</span>
<span class="t" style="left:1684.0px;top:167.3px;font-size:12.61px;line-height:18px;letter-spacing:-0.388px;color:#333;">Notes</span>
<span class="t" style="left:1734.5px;top:167.3px;font-size:12.61px;line-height:18px;letter-spacing:-0.618px;color:#333;word-spacing:0.432px;">Order Status</span>
<span class="t" style="left:1864.5px;top:167.3px;font-size:12.61px;line-height:18px;letter-spacing:-0.414px;color:#333;word-spacing:0.290px;">Picked Status</span>
<div style="left:475px;top:166px;width:18px;height:18px;border:2px solid #0a5f9d;border-radius:2.5px;box-sizing:border-box;"></div>
<div style="left:475px;top:231px;width:18px;height:18px;background:#0a5f9d;border-radius:2.5px;"></div>
<svg style="left:475px;top:231px;" width="18" height="18" viewBox="0 0 18 18"><path d="M3 8.700L7.400 13.200L15.500 3.400" fill="none" stroke="#fff" stroke-width="2"/></svg>
<span class="t" style="left:504.0px;top:231.5px;font-size:12.12px;line-height:18px;letter-spacing:-0.725px;color:#06609e;">SO-0048121</span>
<svg style="left:576.2px;top:230.2px;" width="19.6" height="19.6" viewBox="0 0 24 24"><path fill="#06609e" d="M20 8h-3V4H3c-1.1 0-2 .9-2 2v11h2c0 1.66 1.34 3 3 3s3-1.34 3-3h6c0 1.66 1.34 3 3 3s3-1.34 3-3h2v-5l-3-4zM6 18.5c-.83 0-1.5-.67-1.5-1.5s.67-1.5 1.5-1.5 1.5.67 1.5 1.5-.67 1.5-1.5 1.5zm13.5-9l1.96 2.5H17V9.5h2.5zm-1.5 9c-.83 0-1.5-.67-1.5-1.5s.67-1.5 1.5-1.5 1.5.67 1.5 1.5-.67 1.5-1.5 1.5z"/></svg>
<svg style="left:576.2px;top:230.2px;" width="19.6" height="19.6" viewBox="0 0 24 24"><path d="M4.500 10.300L7.600 13.300L13.600 6.800" fill="none" stroke="#fff" stroke-width="2"/></svg>
<span class="t" style="left:606.0px;top:232.0px;font-size:12.61px;line-height:18px;letter-spacing:-0.311px;color:#333;">10/15/2021</span>
<span class="t" style="left:784.0px;top:231.3px;font-size:12.61px;line-height:18px;letter-spacing:-0.146px;color:#06609e;font-weight:bold;">SHO-0048121</span>
<span class="t" style="left:886.0px;top:232.0px;font-size:12.61px;line-height:18px;letter-spacing:-0.431px;color:#333;word-spacing:0.301px;">10/15/2021 03:29 PM</span>
<span class="t" style="left:1024.0px;top:231.5px;font-size:12.61px;line-height:18px;letter-spacing:-0.470px;color:#333;">0</span>
<span class="t" style="left:1146.0px;top:232.0px;font-size:12.61px;line-height:18px;letter-spacing:-0.355px;color:#333;word-spacing:0.248px;">Spring Valley</span>
<span class="t" style="left:1324.0px;top:231.3px;font-size:12.12px;line-height:18px;letter-spacing:-0.680px;color:#1b3d6d;">$30.00</span>
<span class="t" style="left:1416.0px;top:191.7px;font-size:12.61px;line-height:18px;letter-spacing:-0.470px;color:#333;">0</span>
<span class="t" style="left:1416.0px;top:207.7px;font-size:12.61px;line-height:18px;letter-spacing:-0.458px;color:#333;word-spacing:0.320px;">606 West 57th :</span>
<span class="t" style="left:1416.0px;top:223.7px;font-size:12.61px;line-height:18px;letter-spacing:-0.470px;color:#333;">10</span>
<span class="t" style="left:1416.0px;top:239.7px;font-size:12.61px;line-height:18px;letter-spacing:-0.445px;color:#333;word-spacing:0.311px;">New York, NY, '</span>
<span class="t" style="left:1416.0px;top:255.7px;font-size:12.61px;line-height:18px;letter-spacing:-0.347px;color:#333;word-spacing:0.243px;">tel: 111,</span>
<span class="t" style="left:1416.0px;top:271.7px;font-size:12.61px;line-height:18px;letter-spacing:-0.470px;color:#333;">222</span>
<span class="t" style="left:1416.0px;top:288.2px;font-size:12.61px;line-height:18px;letter-spacing:-0.470px;color:#333;">0</span>
<div style="left:1495.5px;top:192px;width:2.5px;height:95px;background:#fff;"></div>
<span class="t" style="left:1734.0px;top:231.3px;font-size:12.61px;line-height:18px;letter-spacing:-0.621px;color:#2b8fdf;word-spacing:0.435px;">Ready to Ship</span>
<span class="t" style="left:1864.0px;top:230.9px;font-size:12.61px;line-height:18px;letter-spacing:-0.470px;color:#777;word-spacing:0.329px;">Sent to</span>
<span class="t" style="left:1864.0px;top:328.0px;font-size:12.61px;line-height:18px;letter-spacing:-0.621px;color:#2b8fdf;word-spacing:0.435px;">Ready to Ship</span>
<span class="t" style="left:1864.0px;top:424.0px;font-size:12.61px;line-height:18px;letter-spacing:-0.621px;color:#2b8fdf;word-spacing:0.435px;">Ready to Ship</span>
<span class="t" style="left:1864.0px;top:520.0px;font-size:12.61px;line-height:18px;letter-spacing:-0.470px;color:#777;word-spacing:0.329px;">Sent to</span>
<span class="t" style="left:1864.0px;top:607.0px;font-size:12.61px;line-height:18px;letter-spacing:-0.641px;color:#43a047;">Picked</span>
<span class="t" style="left:1864.0px;top:695.0px;font-size:12.61px;line-height:18px;letter-spacing:-0.621px;color:#2b8fdf;word-spacing:0.435px;">Ready to Ship</span>
<span class="t" style="left:1864.0px;top:791.0px;font-size:12.61px;line-height:18px;letter-spacing:-0.621px;color:#2b8fdf;word-spacing:0.435px;">Ready to Ship</span>
<span class="t" style="left:1864.0px;top:887.0px;font-size:12.61px;line-height:18px;letter-spacing:-0.621px;color:#2b8fdf;word-spacing:0.435px;">Ready to Ship</span>
<div style="left:1905px;top:160px;width:15px;height:880px;background:#fff;"></div>
<div style="left:1911px;top:566px;width:4.5px;height:23px;background:#e6e6e6;"></div>
<svg style="left:1907px;top:195px;" width="11" height="7" viewBox="0 0 11 7"><path d="M1.5 5.5L5.5 1.5L9.5 5.5" fill="none" stroke="#e8e8e8" stroke-width="1"/></svg>
<svg style="left:1907px;top:942px;" width="11" height="7" viewBox="0 0 11 7"><path d="M1.5 1.5L5.5 5.5L9.5 1.5" fill="none" stroke="#e8e8e8" stroke-width="1"/></svg>
<div style="left:469.5px;top:948px;width:1450.5px;height:92px;background:#fff;"></div>
<svg style="left:1895px;top:951px;" width="7" height="11" viewBox="0 0 7 11"><path d="M1.5 1.5L5.5 5.5L1.5 9.5" fill="none" stroke="#e0e0e0" stroke-width="1"/></svg>
<div style="left:469.5px;top:964px;width:1450.5px;height:1px;background:#e3e3e3;"></div>
<div style="left:469.5px;top:994.3px;width:1450.5px;height:1px;background:#e3e3e3;"></div>
<span class="t" style="left:1809.7px;top:971.0px;font-size:12.61px;line-height:18px;letter-spacing:-0.176px;color:#222;font-weight:bold;">7.6</span>
<span class="t" style="left:1837.7px;top:971.0px;font-size:12.61px;line-height:18px;letter-spacing:-0.609px;color:#222;word-spacing:0.426px;">Total CBM:</span>
<span class="t" style="left:1897.0px;top:971.0px;font-size:12.61px;line-height:18px;letter-spacing:-0.470px;color:#222;font-weight:bold;">0</span>
<div style="left:1817px;top:1005px;width:87px;height:25px;background:#0a5f9d;border-radius:1.500px;"></div>
<span class="t" style="left:1832.0px;top:1007.8px;font-size:12.15px;line-height:19px;letter-spacing:-1.146px;color:#fff;">SCHEDULE</span>
<div style="left:226px;top:358px;width:43px;height:24.5px;background:rgba(255,255,255,0.07);border:1px solid rgba(255,255,255,0.05);border-right:none;box-sizing:border-box;"></div>
<div style="left:269px;top:358px;width:46.5px;height:24.5px;background:rgba(255,255,255,0.150);border:1px solid rgba(0,0,0,0.03);border-left:none;box-sizing:border-box;"></div>
<div style="left:226px;top:358px;width:89.5px;height:24.5px;overflow:hidden;"></div>
<div style="left:226px;top:358px;width:43px;height:24.5px;overflow:hidden;"><span class="t" style="left:6px;top:3.500px;font-size:12.600px;line-height:18px;letter-spacing:-0.300px;color:rgba(255,255,255,0.120);">Start a capture</span></div>
<div style="left:269px;top:358px;width:46.500px;height:24.5px;overflow:hidden;"><span class="t" style="left:-37px;top:3.500px;font-size:12.600px;line-height:18px;letter-spacing:-0.300px;color:rgba(0,0,0,0.070);">Start a capture</span></div>
<div style="left:374px;top:304px;width:1439.7px;height:740px;background:#f7f7f7;box-shadow:0 0 5px rgba(0,0,0,0.4);border:1px solid #b9b9b9;box-sizing:border-box;"></div>
<svg style="left:380px;top:313px;" width="16" height="16" viewBox="0 0 16 16"><defs><linearGradient id="pg" x1="0" y1="0" x2="0" y2="1"><stop offset="0" stop-color="#3db0ee"/><stop offset="1" stop-color="#1e94dc"/></linearGradient></defs><rect width="16" height="16" rx="1.5" fill="url(#pg)"/><path d="M5.3 2.3h5.4v5.2H5.3z" fill="none" stroke="#fff" stroke-width="1.2"/><rect x="7.2" y="3.8" width="1.6" height="2.2" fill="#cfeaff"/><path d="M2.6 7.6h2v2.3h6.8V7.6h2v5.4H2.6z" fill="#fff"/><rect x="4.4" y="10.8" width="7.2" height="0.9" fill="#2a9ce0"/></svg>
<span class="t" style="left:401.5px;top:313.5px;font-size:11.93px;line-height:17px;letter-spacing:-0.185px;color:#333;word-spacing:0.130px;">Print Preview</span>
<svg style="left:1692px;top:316px;" width="12" height="12" viewBox="0 0 12 12"><path d="M0.5 6.5H11.5" stroke="#222" stroke-width="1"/></svg>
<svg style="left:1738.5px;top:315.5px;" width="11" height="11" viewBox="0 0 11 11"><rect x="0.5" y="0.5" width="10" height="10" fill="none" stroke="#222" stroke-width="1"/></svg>
<svg style="left:1784.5px;top:315.5px;" width="11" height="11" viewBox="0 0 11 11"><path d="M0.5 0.5L10.5 10.5M10.5 0.5L0.5 10.5" stroke="#222" stroke-width="1.1"/></svg>
<svg style="left:1798px;top:367px;" width="6" height="6" viewBox="0 0 6 6"><path d="M6 0V6H0Z" fill="#333"/></svg>
<div style="left:383px;top:349px;width:3px;height:1px;background:#2a2a2a;"></div>
<div style="left:383px;top:351px;width:3px;height:1px;background:#2a2a2a;"></div>
<div style="left:383px;top:353px;width:3px;height:1px;background:#2a2a2a;"></div>
<div style="left:383px;top:355px;width:3px;height:1px;background:#2a2a2a;"></div>
<div style="left:383px;top:357px;width:3px;height:1px;background:#2a2a2a;"></div>
<div style="left:383px;top:359px;width:3px;height:1px;background:#2a2a2a;"></div>
<div style="left:383px;top:361px;width:3px;height:1px;background:#2a2a2a;"></div>
<div style="left:383px;top:363px;width:3px;height:1px;background:#2a2a2a;"></div>
<svg style="left:395px;top:344.5px;" width="31" height="23" viewBox="0 0 31 23"><path d="M0 1.2a1.2 1.2 0 0 1 1.2-1.2H8.8a1 1 0 0 1 1 1v3.6H22.8a1.2 1.2 0 0 1 1.2 1.2v4.4H7.5L1.8 22H1.2A1.2 1.2 0 0 1 0 21Z" fill="#e1ba92"/><path d="M8.6 11.6H30L25 22.2H3.2Z" fill="#d6a671"/></svg>
<svg style="left:436px;top:345px;" width="24" height="24" viewBox="0 0 24 24"><rect x="0" y="0" width="24" height="24" rx="1.200" fill="#666"/><rect x="3.900" y="-0.300" width="16.100" height="10.300" fill="#fafafa"/><rect x="6.100" y="0" width="9.900" height="7.800" fill="#666"/><rect x="8" y="2" width="2.200" height="3.800" fill="#fafafa"/><rect x="3.900" y="14" width="16.100" height="6.100" fill="#fafafa"/></svg>
<div style="left:472.0px;top:340px;width:1px;height:35px;background:#d2d2d2;"></div>
<svg style="left:485px;top:343px;" width="22" height="28" viewBox="0 0 22 28"><path d="M2 2V25.800H20V2" fill="#fafafa" stroke="#ecdccb" stroke-width="3.900"/><rect x="6" y="2" width="10" height="3.900" fill="#c9c9c9"/><rect x="8" y="0" width="6" height="3" rx="0.800" fill="#c9c9c9"/></svg>
<span class="t" style="left:492.2px;top:349.3px;font-size:12.50px;line-height:18px;letter-spacing:0.000px;color:#c2c2c2;font-weight:bold;">?</span>
<svg style="left:520px;top:345px;" width="32" height="27" viewBox="0 0 32 27"><path d="M0.8 0.8H25.2V8.8H0.8Z" fill="none" stroke="#b4c8dc" stroke-width="1.6"/><path d="M18 13.2H0.8V21.2H18" fill="none" stroke="#b4c8dc" stroke-width="1.6"/><path d="M19.3 9.4L31 19.8L25.6 20.4L28.3 26L26.2 27L23.4 21.4L19.6 25Z" fill="#c4c4c4"/></svg>
<svg style="left:561px;top:345px;" width="28" height="24" viewBox="0 0 28 24"><g fill="#666"><path d="M6.5 1.5a1.5 1.5 0 0 1 1.5-1.5h3a1.5 1.5 0 0 1 1.5 1.5V5h3V1.5a1.5 1.5 0 0 1 1.5-1.5h3a1.5 1.5 0 0 1 1.5 1.5L27.6 16a6.2 6.2 0 1 1-12.1 2.5V10h-3v8.5A6.2 6.2 0 1 1 .4 16Z"/></g><circle cx="6.4" cy="18" r="3.9" fill="#f7f7f7"/><circle cx="21.6" cy="18" r="3.9" fill="#f7f7f7"/></svg>
<div style="left:598.8px;top:340px;width:1px;height:35px;background:#d2d2d2;"></div>
<svg style="left:610px;top:343px;" width="28" height="28" viewBox="0 0 28 28"><rect x="0" y="8" width="28" height="16" rx="2.5" fill="#666"/><rect x="7" y="1" width="14" height="8.4" fill="#f7f7f7" stroke="#666" stroke-width="2"/><rect x="7" y="17.4" width="14" height="9.6" fill="#f7f7f7" stroke="#666" stroke-width="2"/></svg>
<svg style="left:647px;top:343px;" width="32" height="30" viewBox="0 0 32 30"><path d="M2.5 8H23.5a2.5 2.5 0 0 1 2.5 2.5V14L20 19V17H6V24H2.5A2.5 2.5 0 0 1 0 21.500V10.5A2.500 2.500 0 0 1 2.5 8Z" fill="#666"/><rect x="7" y="1" width="13" height="8.4" fill="#f7f7f7" stroke="#666" stroke-width="2"/><path d="M7 17.4V27H20" fill="none" stroke="#666" stroke-width="2"/><rect x="8" y="18.4" width="13" height="7.6" fill="#f7f7f7"/><path d="M27.500 13.500L19 23H23.500L22 29.500L31.500 19.500H26.500Z" fill="#dca86f"/></svg>
<svg style="left:690px;top:343px;" width="24" height="28" viewBox="0 0 24 28"><rect x="1" y="1" width="22" height="26" fill="#f7f7f7" stroke="#666" stroke-width="2"/><path d="M7.200 2V26M16.800 2V26M2 6.800H22M2 21.200H22" stroke="#3a6ea8" stroke-width="1.800"/></svg>
<svg style="left:727px;top:343px;" width="28" height="28" viewBox="0 0 28 28"><rect x="1" y="1" width="26" height="26" fill="#f7f7f7" stroke="#666" stroke-width="2"/><path d="M8 8L20 20" stroke="#3a6ea8" stroke-width="2.600"/><path d="M4.500 4.500H12L4.500 12Z M23.500 23.500H16L23.500 16Z" fill="#3a6ea8"/></svg>
<div style="left:765.1px;top:340px;width:1px;height:35px;background:#d2d2d2;"></div>
<svg style="left:778px;top:347px;" width="22" height="20" viewBox="0 0 22 20"><rect x="0" y="0" width="3.600" height="20" rx="0.800" fill="#b6c8dc"/><path d="M22 0.300V19.700L6 10Z" fill="#b6c8dc"/></svg>
<svg style="left:819.4px;top:347px;" width="16" height="20" viewBox="0 0 16 20"><path d="M16 0.300V19.700L0 10Z" fill="#b6c8dc"/></svg>
<svg style="left:862px;top:347px;" width="16" height="20" viewBox="0 0 16 20"><path d="M0 0.300V19.700L16 10Z" fill="#b6c8dc"/></svg>
<svg style="left:895px;top:347px;" width="22" height="20" viewBox="0 0 22 20"><rect x="18.400" y="0" width="3.600" height="20" rx="0.800" fill="#b6c8dc"/><path d="M0 0.300V19.700L16 10Z" fill="#b6c8dc"/></svg>
<svg style="left:932px;top:343px;" width="28" height="28" viewBox="0 0 28 28"><circle cx="14" cy="14" r="13" fill="none" stroke="#35679c" stroke-width="1.700"/><path d="M21.500 6L17.500 17L11 11Z" fill="#c9583a"/><path d="M6.500 22L10.500 11L17 17.500Z" fill="#3a6ea8"/><circle cx="14" cy="14" r="1.700" fill="#f7f7f7"/></svg>
<div style="left:970.1px;top:340px;width:1px;height:35px;background:#d2d2d2;"></div>
<svg style="left:0px;top:0px;pointer-events:none;" width="1920" height="1040" viewBox="0 0 1920 1040"><circle cx="992" cy="353.8" r="8" fill="none" stroke="#666" stroke-width="1.7"/><path d="M997.66 359.46L1006.5 368.3" stroke="#666" stroke-width="2.6" stroke-linecap="round"/><path d="M987.5 353.8H996.5" stroke="#666" stroke-width="1.7"/></svg>
<svg style="left:0px;top:0px;pointer-events:none;" width="1920" height="1040" viewBox="0 0 1920 1040"><circle cx="1031" cy="353.8" r="10.5" fill="none" stroke="#666" stroke-width="1.8"/><path d="M1038.49 361.15L1047 369.5" stroke="#666" stroke-width="3" stroke-linecap="round"/></svg>
<svg style="left:1057px;top:355.8px;" width="8" height="4.5" viewBox="0 0 8 4.5"><path d="M0 0H8L4 4.500Z" fill="#333"/></svg>
<svg style="left:0px;top:0px;pointer-events:none;" width="1920" height="1040" viewBox="0 0 1920 1040"><circle cx="1085" cy="354.4" r="8" fill="none" stroke="#666" stroke-width="1.7"/><path d="M1090.74 359.98L1099.5 368.5" stroke="#666" stroke-width="2.6" stroke-linecap="round"/><path d="M1080.5 354.4H1089.5M1085 349.9V358.9" stroke="#666" stroke-width="1.7"/></svg>
<div style="left:1112.0px;top:340px;width:1px;height:35px;background:#d2d2d2;"></div>
<svg style="left:1127px;top:345px;" width="20" height="26" viewBox="0 0 20 26"><path d="M2.500 1H13L19 7V23.500a1.500 1.500 0 0 1-1.500 1.500H2.500a1.500 1.500 0 0 1-1.500-1.500V2.500A1.500 1.500 0 0 1 2.500 1Z" fill="#f7f7f7" stroke="#666" stroke-width="2"/><path d="M13 1V7H19" fill="none" stroke="#666" stroke-width="1.600"/><path d="M4.500 10.600H15.500M4.500 15H15.500M4.500 19.200H15.500" stroke="#666" stroke-width="1.600"/></svg>
<svg style="left:1160px;top:355.8px;" width="8" height="4.5" viewBox="0 0 8 4.5"><path d="M0 0H8L4 4.500Z" fill="#333"/></svg>
<div style="left:1172px;top:338px;width:38px;height:38px;background:#bcbcba;"></div>
<svg style="left:1181px;top:345px;" width="20" height="26" viewBox="0 0 20 26"><path d="M1 0V8H19V0" fill="none" stroke="#666" stroke-width="1.800"/><path d="M1 26V14H13L19 19.500V26" fill="none" stroke="#666" stroke-width="1.800"/><path d="M13 14V19.500H19" fill="none" stroke="#666" stroke-width="1.500"/><path d="M4 1H16M4 25H16" stroke="#666" stroke-width="1.800"/></svg>
<svg style="left:1230.5px;top:340.8px;" width="12" height="14" viewBox="0 0 12 14"><path d="M1.500 0.800H7L11.200 5V12a1.200 1.200 0 0 1-1.200 1.200H1.500a1.200 1.200 0 0 1-1.200-1.200V2A1.200 1.200 0 0 1 1.500 0.800Z" fill="none" stroke="#d4d4d4" stroke-width="1.500"/><path d="M7 0.800V5H11.200" fill="none" stroke="#d4d4d4" stroke-width="1.200"/></svg>
<svg style="left:1216px;top:357px;" width="12" height="14" viewBox="0 0 12 14"><path d="M1.500 0.800H7L11.200 5V12a1.200 1.200 0 0 1-1.200 1.200H1.500a1.200 1.200 0 0 1-1.200-1.200V2A1.200 1.200 0 0 1 1.500 0.800Z" fill="none" stroke="#d4d4d4" stroke-width="1.500"/><path d="M7 0.800V5H11.200" fill="none" stroke="#d4d4d4" stroke-width="1.200"/></svg>
<svg style="left:1230.5px;top:357px;" width="12" height="14" viewBox="0 0 12 14"><path d="M1.500 0.800H7L11.200 5V12a1.200 1.200 0 0 1-1.200 1.200H1.500a1.200 1.200 0 0 1-1.200-1.200V2A1.200 1.200 0 0 1 1.500 0.800Z" fill="none" stroke="#d4d4d4" stroke-width="1.500"/><path d="M7 0.800V5H11.200" fill="none" stroke="#d4d4d4" stroke-width="1.200"/></svg>
<div style="left:1253.9px;top:340px;width:1px;height:35px;background:#d2d2d2;"></div>
<svg style="left:1266px;top:345px;" width="26" height="25" viewBox="0 0 26 25"><path d="M6 8V2.500A1.500 1.500 0 0 1 7.500 1H18.500L24 6.500V21.500a1.500 1.500 0 0 1-1.500 1.500H7.500A1.500 1.500 0 0 1 6 21.500V18" fill="none" stroke="#666" stroke-width="2"/><path d="M18.500 1V6.500H24" fill="none" stroke="#666" stroke-width="1.500"/><path d="M0.500 14.800H13.500M9.500 10.500L13.800 14.800L9.500 19.100" fill="none" stroke="#5f9c84" stroke-width="1.800"/></svg>
<svg style="left:1302px;top:355.8px;" width="8" height="4.5" viewBox="0 0 8 4.5"><path d="M0 0H8L4 4.500Z" fill="#333"/></svg>
<svg style="left:1321px;top:349px;" width="24" height="18" viewBox="0 0 24 18"><rect x="1" y="1" width="22" height="15.500" rx="1.500" fill="#f7f7f7" stroke="#666" stroke-width="2"/><path d="M2 2.500L12 10.500L22 2.500M2 15.500L9 8.500M22 15.500L15 8.500" fill="none" stroke="#666" stroke-width="1.800"/></svg>
<svg style="left:1356px;top:355.8px;" width="8" height="4.5" viewBox="0 0 8 4.5"><path d="M0 0H8L4 4.500Z" fill="#333"/></svg>
<svg style="left:1375px;top:343px;" width="24" height="28" viewBox="0 0 24 28"><defs><clipPath id="wmc"><path d="M2 2H16L22 8V26H2Z"/></clipPath></defs><path d="M1 1H16.500L23 7.500V27H1Z" fill="#fbfbfb" stroke="#666" stroke-width="2"/><g clip-path="url(#wmc)" stroke="#4a7fb5" stroke-width="1.400"><path d="M3 11L13 1M3 17L17 3M3 23L21 5M5 27L22 10M11 27L22 16M17 27L22 22"/></g><path d="M15.500 0.500V8.500H23.500Z" fill="#666"/></svg>
<div style="left:686px;top:384px;width:815.5px;height:650px;background:#fff;border:1.3px solid #1c78c8;border-bottom:none;box-sizing:border-box;"></div>
<svg style="left:0px;top:0px;pointer-events:none;" width="1920" height="1040" viewBox="0 0 1920 1040"><path d="M687.5 403.5H1500" stroke="#c4c4c4" stroke-width="1" stroke-dasharray="5 5" fill="none"/><path d="M715.5 385V518M715.500 944V1029" stroke="#c4c4c4" stroke-width="1" stroke-dasharray="5 5" fill="none"/><path d="M1472.500 385V518M1472.500 944V1029" stroke="#c4c4c4" stroke-width="1" stroke-dasharray="5 5" fill="none"/></svg>
<svg style="left:715.2px;top:403.6px;" width="91.8" height="51.2" viewBox="0 0 91.8 51.2"><defs><clipPath id="cc"><rect width="91.800" height="51.200"/></clipPath>
<linearGradient id="gl" x1="0" y1="0" x2="0" y2="1"><stop offset="0" stop-color="#e4dfcd"/><stop offset="0.450" stop-color="#c9c4b2"/><stop offset="1" stop-color="#a9a594"/></linearGradient>
<linearGradient id="tb" x1="0" y1="0" x2="0" y2="1"><stop offset="0" stop-color="#5e3217"/><stop offset="0.400" stop-color="#9a5a2e"/><stop offset="1" stop-color="#a8683c"/></linearGradient>
<linearGradient id="rm" x1="0" y1="0" x2="1" y2="0"><stop offset="0" stop-color="#2a1c15"/><stop offset="0.600" stop-color="#2a1c15"/><stop offset="0.800" stop-color="#b8ae99"/><stop offset="1" stop-color="#cfc7b3"/></linearGradient>
<radialGradient id="cr" cx="0.500" cy="0.500" r="0.600"><stop offset="0" stop-color="#f8f4ea"/><stop offset="1" stop-color="#efe9d9"/></radialGradient></defs>
<g clip-path="url(#cc)"><rect width="91.800" height="51.200" fill="#180d08"/>
<rect x="0" y="30.500" width="40" height="21" fill="url(#tb)"/>
<rect x="40" y="41" width="52" height="11" fill="#925630"/>
<path d="M0 41.500L28 41.500L30 51.200H0Z" fill="#e3e3de"/>
<path d="M44 48.500L51 49.500V51.200H44Z" fill="#dcdcd6"/>
<path d="M52.500 0H91.800V17.500L73 33.500L66 33.500L60 24Q60 6 52.500 0Z" fill="#e9e3d1"/>
<path d="M54 0H91.800V8Q75 12 54 0Z" fill="#f1ecdd"/>
<path d="M83 1.200L85 0.400L87 1.300L85 2Z" fill="#6b4630"/>
<path d="M66 33L72.500 33L70 51.200H64.500Z" fill="#8d8a84" opacity="0.850"/>
<path d="M67.300 33L68.500 33L66.800 51.200H65.800Z" fill="#d9d7d2" opacity="0.900"/>
<path d="M5 16Q38 44 77 25L47 51.200H26.500Z" fill="url(#gl)"/>
<g transform="rotate(7 40.400 17.800)"><ellipse cx="40.400" cy="17.800" rx="36.600" ry="15.500" fill="url(#rm)" stroke="#b9b6ae" stroke-width="0.900"/>
<ellipse cx="40.300" cy="21.300" rx="34.600" ry="13.400" fill="#d5cfbd"/>
<ellipse cx="40" cy="20.300" rx="33.500" ry="12.600" fill="url(#cr)"/>
<ellipse cx="41.500" cy="20.500" rx="11" ry="5.500" fill="#8a6a52" opacity="0.350"/>
<ellipse cx="42" cy="20.800" rx="7.500" ry="3.600" fill="#6a4a36" opacity="0.700"/>
<ellipse cx="42.500" cy="20.800" rx="4.500" ry="2.200" fill="#4e2f1f"/>
<path d="M30 17l1 .5M33 23l1 .6M50 16l1 .5M53 22l1 .4M36 15l.8 .5M47 26l1 .4M38 26l.8 .4M55 18l.8 .4M28 21l.8 .4M45 13.500l.8 .4" stroke="#5b3a28" stroke-width="0.900"/>
<rect x="26" y="2.500" width="8" height="4.500" fill="#bfbfbf" opacity="0.700"/></g>
</g></svg>
<span class="t" style="left:1084.0px;top:403.8px;font-size:11.93px;line-height:17px;letter-spacing:-0.380px;color:#1a1a1a;">ALWAZONSALE</span>
<span class="t" style="left:1084.5px;top:419.5px;font-size:11.93px;line-height:17px;letter-spacing:-0.412px;color:#1a1a1a;word-spacing:0.288px;">15 Pearlman DR</span>
<span class="t" style="left:1084.0px;top:435.0px;font-size:11.93px;line-height:17px;letter-spacing:-0.246px;color:#1a1a1a;word-spacing:0.172px;">Spring Valley NY 10977 US</span>
<span class="t" style="left:1282.5px;top:403.8px;font-size:11.93px;line-height:17px;letter-spacing:-0.716px;color:#1a1a1a;font-weight:bold;">P:</span>
<span class="t" style="left:1296.0px;top:403.8px;font-size:11.93px;line-height:17px;letter-spacing:-0.235px;color:#1a1a1a;">1234567890</span>
<span class="t" style="left:1282.5px;top:420.0px;font-size:11.93px;line-height:17px;letter-spacing:-0.966px;color:#1a1a1a;font-weight:bold;">E:</span>
<span class="t" style="left:1295.5px;top:420.0px;font-size:11.93px;line-height:17px;letter-spacing:0.076px;color:#1a1a1a;">office@squid.com</span>
<span class="t" style="left:1282.5px;top:435.8px;font-size:11.93px;line-height:17px;letter-spacing:-0.880px;color:#1a1a1a;font-weight:bold;">F:</span>
<span class="t" style="left:1295.5px;top:435.8px;font-size:11.93px;line-height:17px;letter-spacing:0.114px;color:#1a1a1a;">718-215-1111</span>
<div style="left:715.5px;top:461px;width:757px;height:1px;background:#cfcfcf;"></div>
<span class="t" style="left:714.5px;top:481.8px;font-size:20.80px;line-height:29px;letter-spacing:-0.138px;color:#111;font-weight:bold;word-spacing:0.097px;">Vendor Pickup Report 11/16/2021</span>
<div style="left:715px;top:518px;width:757.5px;height:26.7px;background:#014f86;"></div>
<div style="left:715px;top:544.5px;width:31.5px;height:393.8px;background:#f4f4f4;"></div>
<div style="left:746px;top:518px;width:1px;height:26.7px;background:#dfe8f0;"></div>
<div style="left:798px;top:518px;width:1px;height:26.7px;background:#dfe8f0;"></div>
<div style="left:910px;top:518px;width:1px;height:26.7px;background:#dfe8f0;"></div>
<div style="left:1107px;top:518px;width:1px;height:26.7px;background:#dfe8f0;"></div>
<div style="left:1189px;top:518px;width:1px;height:26.7px;background:#dfe8f0;"></div>
<div style="left:1271px;top:518px;width:1px;height:26.7px;background:#dfe8f0;"></div>
<div style="left:1323px;top:518px;width:1px;height:26.7px;background:#dfe8f0;"></div>
<div style="left:1400px;top:518px;width:1px;height:26.7px;background:#dfe8f0;"></div>
<div style="left:715px;top:544.5px;width:1px;height:394.3px;background:#c4c4c4;"></div>
<div style="left:746px;top:544.5px;width:1px;height:394.3px;background:#c4c4c4;"></div>
<div style="left:798px;top:544.5px;width:1px;height:394.3px;background:#c4c4c4;"></div>
<div style="left:910px;top:544.5px;width:1px;height:394.3px;background:#c4c4c4;"></div>
<div style="left:1107px;top:544.5px;width:1px;height:394.3px;background:#c4c4c4;"></div>
<div style="left:1189px;top:544.5px;width:1px;height:394.3px;background:#c4c4c4;"></div>
<div style="left:1271px;top:544.5px;width:1px;height:394.3px;background:#c4c4c4;"></div>
<div style="left:1323px;top:544.5px;width:1px;height:394.3px;background:#c4c4c4;"></div>
<div style="left:1400px;top:544.5px;width:1px;height:394.3px;background:#c4c4c4;"></div>
<div style="left:1472px;top:544.5px;width:1px;height:394.3px;background:#c4c4c4;"></div>
<div style="left:715px;top:581px;width:758px;height:1px;background:#c4c4c4;"></div>
<div style="left:715px;top:633px;width:758px;height:1px;background:#c4c4c4;"></div>
<div style="left:715px;top:685px;width:758px;height:1px;background:#c4c4c4;"></div>
<div style="left:715px;top:801px;width:758px;height:1px;background:#c4c4c4;"></div>
<div style="left:715px;top:835px;width:758px;height:1px;background:#c4c4c4;"></div>
<div style="left:715px;top:870px;width:758px;height:1px;background:#c4c4c4;"></div>
<div style="left:715px;top:904px;width:758px;height:1px;background:#c4c4c4;"></div>
<div style="left:715px;top:938px;width:758px;height:1px;background:#c4c4c4;"></div>
<span class="t" style="left:727.2px;top:523.5px;font-size:11.93px;line-height:17px;letter-spacing:0.365px;color:#fff;font-weight:bold;">#</span>
<span class="t" style="left:755.0px;top:523.5px;font-size:11.93px;line-height:17px;letter-spacing:0.104px;color:#fff;font-weight:bold;">Image</span>
<span class="t" style="left:806.0px;top:523.5px;font-size:11.93px;line-height:17px;letter-spacing:0.492px;color:#fff;font-weight:bold;">Item</span>
<span class="t" style="left:918.0px;top:523.5px;font-size:11.93px;line-height:17px;letter-spacing:-0.057px;color:#fff;font-weight:bold;">Description</span>
<span class="t" style="left:1113.0px;top:523.5px;font-size:11.93px;line-height:17px;letter-spacing:0.126px;color:#fff;font-weight:bold;">Ordered Qty</span>
<span class="t" style="left:1196.0px;top:523.5px;font-size:11.93px;line-height:17px;letter-spacing:-0.122px;color:#fff;font-weight:bold;word-spacing:0.086px;">Qty Shipped</span>
<span class="t" style="left:1282.5px;top:523.5px;font-size:11.93px;line-height:17px;letter-spacing:0.388px;color:#fff;font-weight:bold;">UOM</span>
<span class="t" style="left:1333.0px;top:523.5px;font-size:11.93px;line-height:17px;letter-spacing:-0.157px;color:#fff;font-weight:bold;word-spacing:0.110px;">Qty / Case</span>
<span class="t" style="left:1421.0px;top:523.5px;font-size:11.93px;line-height:17px;letter-spacing:-0.631px;color:#fff;font-weight:bold;">Cases</span>
<span class="t" style="left:918.0px;top:556.0px;font-size:11.93px;line-height:17px;letter-spacing:-0.075px;color:#111;font-weight:bold;word-spacing:0.052px;">123, Aser</span>
<span class="t" style="left:727.1px;top:599.0px;font-size:12.12px;line-height:18px;letter-spacing:0.209px;color:#111;-webkit-text-stroke:0.35px #111;">1</span>
<span class="t" style="left:727.1px;top:651.0px;font-size:12.12px;line-height:18px;letter-spacing:0.209px;color:#111;-webkit-text-stroke:0.35px #111;">2</span>
<span class="t" style="left:727.1px;top:735.0px;font-size:12.12px;line-height:18px;letter-spacing:0.209px;color:#111;-webkit-text-stroke:0.35px #111;">3</span>
<span class="t" style="left:727.1px;top:810.0px;font-size:12.12px;line-height:18px;letter-spacing:0.209px;color:#111;-webkit-text-stroke:0.35px #111;">4</span>
<span class="t" style="left:727.1px;top:844.0px;font-size:12.12px;line-height:18px;letter-spacing:0.209px;color:#111;-webkit-text-stroke:0.35px #111;">5</span>
<span class="t" style="left:727.1px;top:879.0px;font-size:12.12px;line-height:18px;letter-spacing:0.209px;color:#111;-webkit-text-stroke:0.35px #111;">6</span>
<span class="t" style="left:727.1px;top:913.0px;font-size:12.12px;line-height:18px;letter-spacing:0.209px;color:#111;-webkit-text-stroke:0.35px #111;">7</span>
<span class="t" style="left:806.0px;top:589.5px;font-size:11.93px;line-height:17px;letter-spacing:-0.468px;color:#1a1a1a;">021</span>
<span class="t" style="left:806.0px;top:641.5px;font-size:11.93px;line-height:17px;letter-spacing:-0.038px;color:#1a1a1a;">0311</span>
<span class="t" style="left:806.0px;top:693.5px;font-size:11.93px;line-height:17px;letter-spacing:-0.173px;color:#1a1a1a;">0713524870195</span>
<span class="t" style="left:806.0px;top:809.5px;font-size:11.93px;line-height:17px;letter-spacing:-0.247px;color:#1a1a1a;word-spacing:0.173px;">Delivery Charge</span>
<span class="t" style="left:806.0px;top:843.5px;font-size:11.93px;line-height:17px;letter-spacing:-0.020px;color:#1a1a1a;word-spacing:0.014px;">Framing Metal</span>
<span class="t" style="left:806.0px;top:878.5px;font-size:11.93px;line-height:17px;letter-spacing:-0.519px;color:#1a1a1a;">Screws</span>
<span class="t" style="left:806.0px;top:912.5px;font-size:11.93px;line-height:17px;letter-spacing:0.063px;color:#1a1a1a;">Wood 2x4</span>
<span class="t" style="left:918.0px;top:591.5px;font-size:11.93px;line-height:17px;letter-spacing:-0.098px;color:#1a1a1a;word-spacing:0.069px;">second test</span>
<span class="t" style="left:918.0px;top:694.5px;font-size:11.93px;line-height:17px;letter-spacing:-0.033px;color:#1a1a1a;word-spacing:0.023px;">Apple Watch Band, 42mm</span>
<span class="t" style="left:918.0px;top:710.5px;font-size:11.93px;line-height:17px;letter-spacing:-0.211px;color:#1a1a1a;word-spacing:0.147px;">Genuine Leather Strap Wrist Band</span>
<span class="t" style="left:918.0px;top:726.5px;font-size:11.93px;line-height:17px;letter-spacing:-0.146px;color:#1a1a1a;word-spacing:0.102px;">Replacement W/ Metal Clasp</span>
<span class="t" style="left:918.0px;top:742.5px;font-size:11.93px;line-height:17px;letter-spacing:-0.101px;color:#1a1a1a;word-spacing:0.070px;">Classic Buckle &amp; Modern Buckle</span>
<span class="t" style="left:918.0px;top:758.5px;font-size:11.93px;line-height:17px;letter-spacing:0.136px;color:#1a1a1a;">for Apple Watch All Models</span>
<span class="t" style="left:918.0px;top:774.5px;font-size:11.93px;line-height:17px;letter-spacing:0.214px;color:#1a1a1a;">38mm</span>
<span class="t" style="left:1110.5px;top:589.5px;font-size:11.93px;line-height:17px;letter-spacing:-0.445px;color:#1a1a1a;">1</span>
<span class="t" style="left:1191.0px;top:589.5px;font-size:11.93px;line-height:17px;letter-spacing:-0.445px;color:#1a1a1a;">0</span>
<span class="t" style="left:1110.5px;top:641.5px;font-size:11.93px;line-height:17px;letter-spacing:-0.445px;color:#1a1a1a;">1</span>
<span class="t" style="left:1191.0px;top:641.5px;font-size:11.93px;line-height:17px;letter-spacing:-0.445px;color:#1a1a1a;">0</span>
<span class="t" style="left:1110.5px;top:693.5px;font-size:11.93px;line-height:17px;letter-spacing:-0.445px;color:#1a1a1a;">1</span>
<span class="t" style="left:1191.0px;top:693.5px;font-size:11.93px;line-height:17px;letter-spacing:-0.445px;color:#1a1a1a;">0</span>
<span class="t" style="left:1110.5px;top:809.5px;font-size:11.93px;line-height:17px;letter-spacing:-0.445px;color:#1a1a1a;">1</span>
<span class="t" style="left:1191.0px;top:809.5px;font-size:11.93px;line-height:17px;letter-spacing:-0.445px;color:#1a1a1a;">0</span>
<span class="t" style="left:1110.5px;top:843.5px;font-size:11.93px;line-height:17px;letter-spacing:-0.445px;color:#1a1a1a;">1</span>
<span class="t" style="left:1191.0px;top:843.5px;font-size:11.93px;line-height:17px;letter-spacing:-0.445px;color:#1a1a1a;">0</span>
<span class="t" style="left:1110.5px;top:878.5px;font-size:11.93px;line-height:17px;letter-spacing:-0.445px;color:#1a1a1a;">1</span>
<span class="t" style="left:1191.0px;top:878.5px;font-size:11.93px;line-height:17px;letter-spacing:-0.445px;color:#1a1a1a;">0</span>
<span class="t" style="left:1110.5px;top:912.5px;font-size:11.93px;line-height:17px;letter-spacing:-0.445px;color:#1a1a1a;">1</span>
<span class="t" style="left:1191.0px;top:912.5px;font-size:11.93px;line-height:17px;letter-spacing:-0.445px;color:#1a1a1a;">0</span>
<span class="t" style="left:1273.0px;top:641.5px;font-size:11.93px;line-height:17px;letter-spacing:0.935px;color:#1a1a1a;">ft</span>
<span class="t" style="left:1332.0px;top:589.5px;font-size:11.93px;line-height:17px;letter-spacing:0.115px;color:#1a1a1a;">10</span>
<span class="t" style="left:1332.0px;top:641.5px;font-size:11.93px;line-height:17px;letter-spacing:-0.445px;color:#1a1a1a;">5</span>
<span class="t" style="left:1408.0px;top:589.5px;font-size:11.93px;line-height:17px;letter-spacing:-0.528px;color:#1a1a1a;">0.1</span>
<span class="t" style="left:1408.0px;top:641.5px;font-size:11.93px;line-height:17px;letter-spacing:-0.361px;color:#1a1a1a;">0.2</span>
<svg style="left:750px;top:591px;" width="47" height="33" viewBox="0 0 47 33"><rect width="47" height="33" fill="#a7673f"/><path d="M0 0H47V10H0Z" fill="#b07048" opacity="0.6"/>
<path d="M8.500 9L17 2L41.500 13L39.500 29L31 31.500L9.500 20Z" fill="#2a1611"/>
<path d="M17.500 3L40.500 13.500L33 19L9.500 9.500Z" fill="#6b3018"/><path d="M19 5L37 13L32 16.500L13 9Z" fill="#2b1813"/>
<path d="M10 15.500L32.500 24.500" stroke="#d4b070" stroke-width="0.900" stroke-dasharray="1 1"/>
<circle cx="25.500" cy="10" r="1.700" fill="none" stroke="#e0c080" stroke-width="0.800"/>
<path d="M16 21Q5 26 7.500 31Q12 32 17 24" fill="none" stroke="#1a0f0c" stroke-width="0.900"/></svg>
<svg style="left:750px;top:642px;" width="47" height="35" viewBox="0 0 47 35"><rect width="47" height="35" fill="#b94355"/><rect width="20" height="17" fill="#4a466f"/><rect x="20" width="9" height="17" fill="#6f8087"/><rect x="29" width="18" height="15" fill="#a82136"/><rect y="17" width="47" height="18" fill="#c04a5a"/><rect y="29" width="47" height="6" fill="#9c3150"/>
<rect x="0" y="12" width="18" height="6" fill="#5d7876"/>
<path d="M27 0L30 14L36 4L38 0Z" fill="#2a1418"/>
<path d="M13 12L16 10L19 13L22 10L25 13L27 20L34 21L35 28L31 30L28 27L24 30L20 29L17 24L14 19Z" fill="#efd9a8"/>
<path d="M13 12L16 10.500L17 14.500L14 15.500ZM21 10.500L25 13L23 16L20.500 14Z" fill="#6b5a55"/>
<path d="M17 28L18.500 32M21 29L22 32.500M27 28L28 32M31 29L32 32" stroke="#3a2a2a" stroke-width="1"/></svg>
<svg style="left:756px;top:687px;" width="40" height="49" viewBox="0 0 40 49"><defs><linearGradient id="wb" x1="0" y1="0" x2="1" y2="0"><stop offset="0" stop-color="#d8d8d8"/><stop offset="0.150" stop-color="#fff"/><stop offset="0.850" stop-color="#fff"/><stop offset="1" stop-color="#cfcfcf"/></linearGradient></defs>
<path d="M4.500 1.500H17.500V14H4.500Z" fill="#cf3a3c"/><path d="M4.500 1.500H17.500V6H4.500Z" fill="#c53436"/>
<path d="M5 38.500H17L16 48H6Z" fill="#cf3a3c"/>
<path d="M1 16L4.500 13.500H17.500L20 16V36L17.500 38.500H4.500L1 36Z" fill="url(#wb)"/>
<path d="M1 16H20M1 36H20" stroke="#9a9a9a" stroke-width="0.800"/>
<path d="M-2 26H15" stroke="#d6d6d6" stroke-width="0.800"/>
<rect x="19.500" y="15" width="19.500" height="23.500" rx="3" fill="#e9e9e9" stroke="#8e8e8e" stroke-width="1"/>
<circle cx="29.500" cy="26.700" r="7.800" fill="#2b2b2b"/><circle cx="29.500" cy="26.700" r="3.600" fill="none" stroke="#7a7a7a" stroke-width="1.300"/><circle cx="29.500" cy="26.700" r="1.200" fill="#888"/></svg>
<div style="left:376px;top:1033px;width:1436.5px;height:7px;background:#ececec;"></div>
<div style="left:380px;top:1032px;width:1428px;height:1.3px;background:#b2b2b2;"></div>
<div style="left:415px;top:1036px;width:30px;height:6px;background:#fdfdfd;border:1px solid #b5b5b5;box-sizing:border-box;"></div>
<div style="left:1727.3px;top:1036px;width:4.5px;height:4px;background:#222;"></div>
<div style="left:1796px;top:1038px;width:1.5px;height:2px;background:#444;"></div>
</body></html>
